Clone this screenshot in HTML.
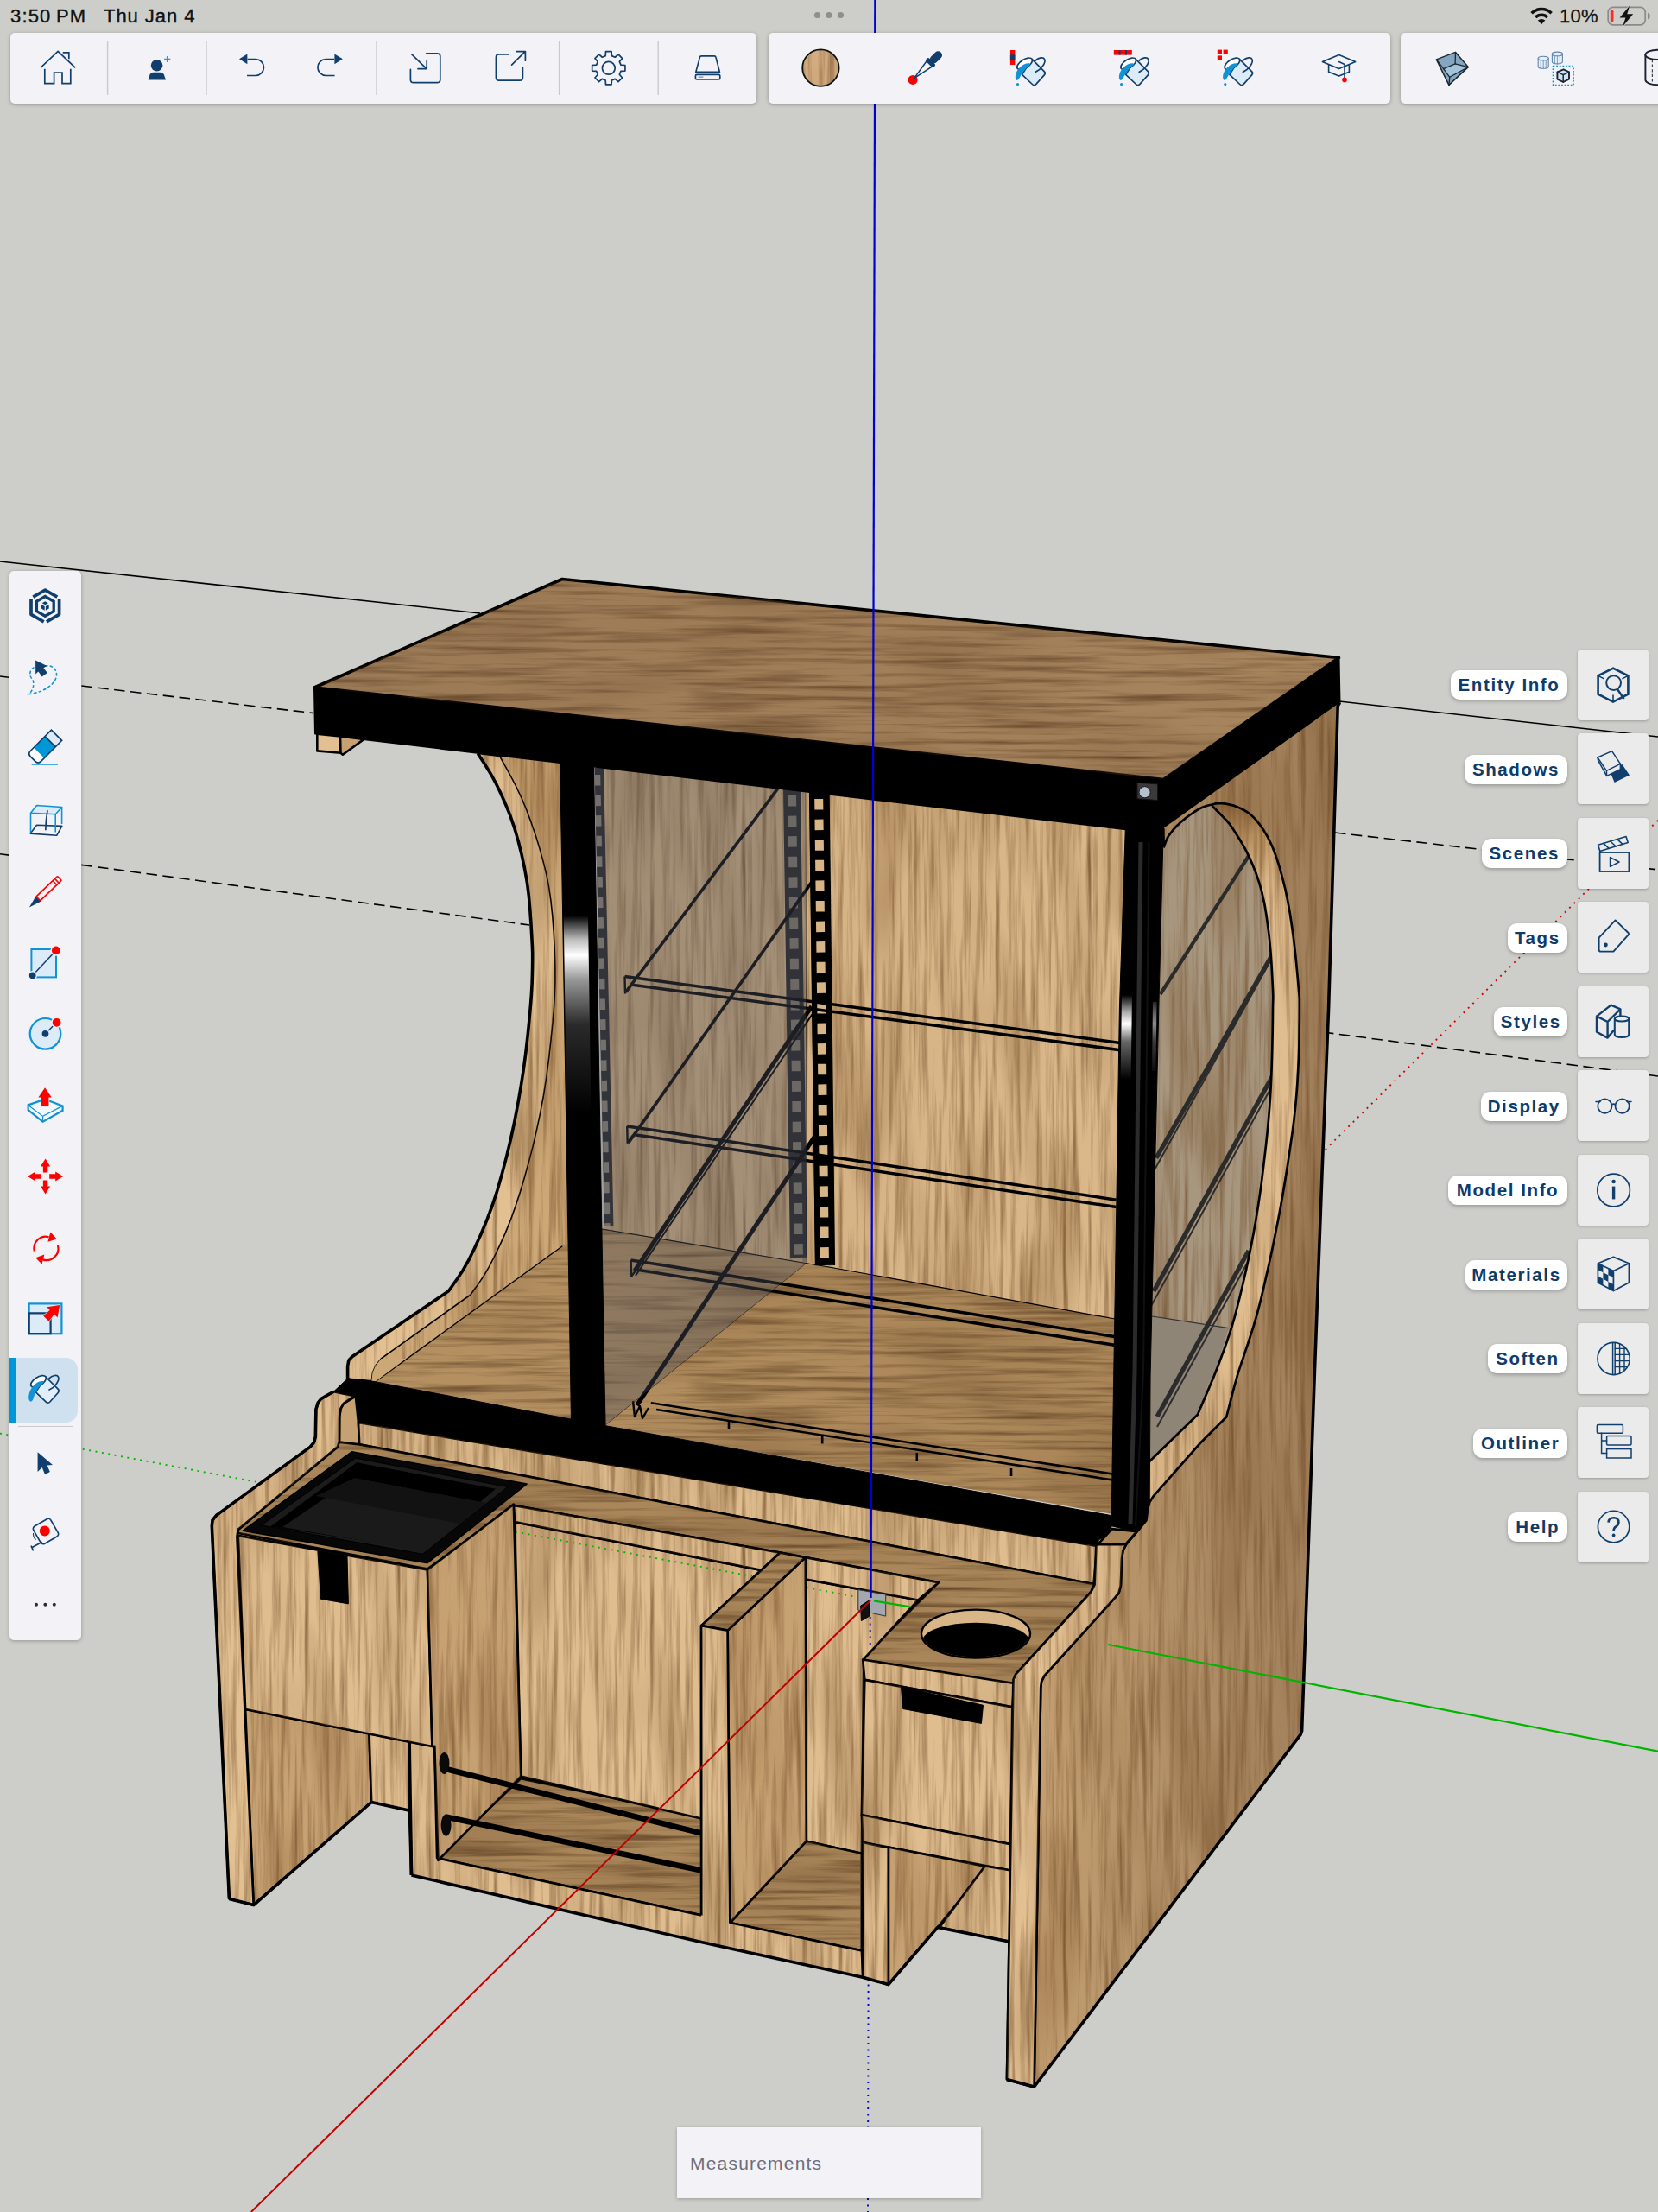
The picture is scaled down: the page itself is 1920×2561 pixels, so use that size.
<!DOCTYPE html>
<html lang="en">
<head>
<meta charset="utf-8">
<title>SketchUp</title>
<style>
html,body{margin:0;padding:0;}
body{width:1920px;height:2561px;overflow:hidden;position:relative;background:#cdcec9;font-family:"Liberation Sans",sans-serif;}
#scene{position:absolute;left:0;top:0;}
.abs{position:absolute;}
.status{position:absolute;top:0;left:0;width:1920px;height:36px;color:#111;font-size:22px;line-height:36px;}
.status span{position:absolute;top:0;white-space:nowrap;}
.tb{position:absolute;background:#f2f2f7;border-radius:5px;box-shadow:0 1px 4px rgba(0,0,0,.28);}
.tb svg{position:absolute;overflow:visible;}
.sep{position:absolute;top:13px;width:2px;height:56px;background:#cfcfd4;}
.rb{position:absolute;left:1827px;width:82px;height:82px;background:#ebebeb;border-radius:4px;box-shadow:0 1px 3px rgba(0,0,0,.25);}
.rb svg{position:absolute;left:0;top:0;}
.lb{position:absolute;right:105px;height:34px;line-height:34px;background:#fff;border-radius:11px;color:#0e3b69;font-weight:bold;font-size:20.5px;letter-spacing:1.6px;padding:0 9px;box-shadow:0 2px 4px rgba(0,0,0,.25);white-space:nowrap;}
#meas{position:absolute;left:784px;top:2463px;width:352px;height:82px;background:#f2f2f7;box-shadow:0 1px 4px rgba(0,0,0,.25);color:#6d6d7a;font-size:21px;letter-spacing:1.2px;line-height:84px;text-indent:15px;}
</style>
</head>
<body>
<!--SCENE-->
<svg id="scene" width="1920" height="2561" viewBox="0 0 1920 2561">
<!--AXES-BACK-->
<g fill="none" stroke="#000" stroke-width="1.6">
<path d="M0 650 L556 710 M1551 812 L1920 853"/>
<path d="M0 783 L363 825.6 M1546 964 L1920 1007" stroke-dasharray="12.5 6.5"/>
<path d="M0 988.7 L613 1071 M1532 1195 L1920 1246" stroke-dasharray="12.5 6.5"/>
</g>
<path d="M1534.8 1331 L1920 949.7" stroke="#d40000" stroke-width="1.9" stroke-dasharray="1.9 5.6" fill="none"/>
<path d="M0 1659.6 L296 1715.6" stroke="#00b400" stroke-width="1.9" stroke-dasharray="1.9 5.6" fill="none"/>
<path d="M1005.6 2290 L1005 2561" stroke="#0000c8" stroke-width="1.9" stroke-dasharray="1.9 5.6" fill="none"/>
<!--/AXES-BACK-->
<!--MODEL-->
<defs>
<linearGradient id="gTop" gradientUnits="userSpaceOnUse" x1="400" y1="800" x2="1500" y2="800"><stop offset="0" stop-color="#9b7a56"/><stop offset=".5" stop-color="#a07e58"/><stop offset="1" stop-color="#a7855e"/></linearGradient>
<linearGradient id="gBack" gradientUnits="userSpaceOnUse" x1="700" y1="900" x2="1300" y2="900"><stop offset="0" stop-color="#d3b082"/><stop offset="1" stop-color="#dab88a"/></linearGradient>
<linearGradient id="gSide" gradientUnits="userSpaceOnUse" x1="1200" y1="1500" x2="1540" y2="1500"><stop offset="0" stop-color="#c29e71"/><stop offset=".6" stop-color="#ae8c64"/><stop offset="1" stop-color="#9e7e5a"/></linearGradient>
<linearGradient id="gFloor" gradientUnits="userSpaceOnUse" x1="400" y1="1500" x2="1300" y2="1700"><stop offset="0" stop-color="#b69263"/><stop offset="1" stop-color="#a98557"/></linearGradient>
<linearGradient id="gArc" gradientUnits="userSpaceOnUse" x1="0" y1="930" x2="0" y2="1020"><stop offset="0" stop-color="#8f6c45"/><stop offset=".4" stop-color="#c49c6a"/><stop offset="1" stop-color="#e0bd8f"/></linearGradient>
<linearGradient id="gPostL" gradientUnits="userSpaceOnUse" x1="0" y1="1060" x2="0" y2="1290"><stop offset="0" stop-color="#000"/><stop offset=".12" stop-color="#bbb"/><stop offset=".2" stop-color="#fff"/><stop offset=".32" stop-color="#999"/><stop offset=".55" stop-color="#2a2a2a"/><stop offset="1" stop-color="#000"/></linearGradient>
<linearGradient id="gPostR" gradientUnits="userSpaceOnUse" x1="0" y1="1152" x2="0" y2="1250"><stop offset="0" stop-color="#000"/><stop offset=".2" stop-color="#aaa"/><stop offset=".34" stop-color="#fff"/><stop offset=".55" stop-color="#666"/><stop offset="1" stop-color="#000"/></linearGradient>
<filter id="grainV" x="0" y="0" width="400" height="800" filterUnits="userSpaceOnUse" primitiveUnits="userSpaceOnUse" color-interpolation-filters="sRGB"><feTurbulence type="fractalNoise" baseFrequency="0.17 0.00625" numOctaves="4" seed="7" stitchTiles="stitch" result="n"/><feColorMatrix in="n" type="matrix" values="0 0 0 0 0.40  0 0 0 0 0.25  0 0 0 0 0.11  1.25 0.6 0 0 -0.84" result="c"/><feTurbulence type="fractalNoise" baseFrequency="0.02 0.005" numOctaves="2" seed="11" stitchTiles="stitch" result="m"/><feColorMatrix in="m" type="matrix" values="0 0 0 0 0.45  0 0 0 0 0.3  0 0 0 0 0.14  0 0.85 0 0 -0.36" result="d"/><feMerge result="e"><feMergeNode in="d"/><feMergeNode in="c"/></feMerge><feComposite in="e" in2="SourceGraphic" operator="in"/></filter>
<filter id="grainH" x="0" y="0" width="800" height="400" filterUnits="userSpaceOnUse" primitiveUnits="userSpaceOnUse" color-interpolation-filters="sRGB"><feTurbulence type="fractalNoise" baseFrequency="0.00625 0.16" numOctaves="4" seed="3" stitchTiles="stitch" result="n"/><feColorMatrix in="n" type="matrix" values="0 0 0 0 0.30  0 0 0 0 0.19  0 0 0 0 0.09  1.25 0.6 0 0 -0.84" result="c"/><feTurbulence type="fractalNoise" baseFrequency="0.005 0.02" numOctaves="2" seed="5" stitchTiles="stitch" result="m"/><feColorMatrix in="m" type="matrix" values="0 0 0 0 0.32  0 0 0 0 0.2  0 0 0 0 0.1  0 0.55 0 0 -0.24" result="d"/><feMerge result="e"><feMergeNode in="d"/><feMergeNode in="c"/></feMerge><feComposite in="e" in2="SourceGraphic" operator="in"/></filter>
<pattern id="pGV" width="400" height="800" patternUnits="userSpaceOnUse"><rect width="400" height="800" filter="url(#grainV)"/></pattern>
<pattern id="pGH" width="800" height="400" patternUnits="userSpaceOnUse"><rect width="800" height="400" filter="url(#grainH)"/></pattern>
</defs>
<polygon points="574.4,867.0 578.6,875.4 583.3,883.9 590.0,896.0 597.4,910.0 604.0,924.0 609.8,938.0 615.3,952.9 620.5,968.1 625.1,983.1 629.0,997.4 632.5,1011.5 635.4,1026.1 637.8,1042.2 639.8,1060.6 641.3,1080.7 642.3,1101.0 642.8,1119.9 642.8,1136.5 642.3,1151.7 641.4,1167.2 639.9,1184.4 637.9,1204.3 635.5,1225.9 632.6,1247.9 629.3,1268.9 625.6,1288.7 621.5,1308.0 617.1,1326.7 612.4,1344.9 607.5,1362.7 602.4,1380.0 597.0,1396.6 591.3,1412.4 585.2,1427.6 578.6,1442.1 572.1,1455.5 566.0,1467.3 559.9,1477.6 553.9,1486.6 548.6,1493.8 544.9,1499.0 441.4,1572.9 431.7,1601.8 668.0,1440.0 660.0,872.0" fill="#cda877" stroke="none" stroke-width="0" stroke-linejoin="round" />
<polygon points="574.4,867.0 578.6,875.4 583.3,883.9 590.0,896.0 597.4,910.0 604.0,924.0 609.8,938.0 615.3,952.9 620.5,968.1 625.1,983.1 629.0,997.4 632.5,1011.5 635.4,1026.1 637.8,1042.2 639.8,1060.6 641.3,1080.7 642.3,1101.0 642.8,1119.9 642.8,1136.5 642.3,1151.7 641.4,1167.2 639.9,1184.4 637.9,1204.3 635.5,1225.9 632.6,1247.9 629.3,1268.9 625.6,1288.7 621.5,1308.0 617.1,1326.7 612.4,1344.9 607.5,1362.7 602.4,1380.0 597.0,1396.6 591.3,1412.4 585.2,1427.6 578.6,1442.1 572.1,1455.5 566.0,1467.3 559.9,1477.6 553.9,1486.6 548.6,1493.8 544.9,1499.0 441.4,1572.9 431.7,1601.8 668.0,1440.0 660.0,872.0" fill="url(#pGV)"/>
<polygon points="690.0,886.0 1304.0,952.0 1292.0,1530.0 960.0,1466.0 700.0,1424.0" fill="url(#gBack)" stroke="none" stroke-width="0" stroke-linejoin="round" />
<polygon points="690.0,886.0 1304.0,952.0 1292.0,1530.0 960.0,1466.0 700.0,1424.0" fill="url(#pGV)"/>
<polygon points="697.0,1422.5 960.0,1466.5 1291.0,1527.0 1288.0,1752.7 409.0,1600.0 431.7,1601.8 651.3,1442.8" fill="url(#gFloor)" stroke="none" stroke-width="0" stroke-linejoin="round" />
<polygon points="697.0,1422.5 960.0,1466.5 1291.0,1527.0 1288.0,1752.7 409.0,1600.0 431.7,1601.8 651.3,1442.8" fill="url(#pGH)"/>
<polyline points="697.0,1423.0 960.0,1467.0 1291.0,1527.0" fill="none" stroke="#000" stroke-width="1.2" stroke-linejoin="round" stroke-linecap="butt" />
<polyline points="651.3,1442.8 431.7,1601.8" fill="none" stroke="#000" stroke-width="1.3" stroke-linejoin="round" stroke-linecap="butt" />
<line x1="693.8" y1="889" x2="705.2" y2="1420" stroke="#232323" stroke-width="10.5"/>
<line x1="692" y1="897" x2="703.4" y2="1420" stroke="#8b8173" stroke-width="6.4" stroke-dasharray="12.5 11.1"/>
<line x1="917" y1="913" x2="925" y2="1456" stroke="#222" stroke-width="20" opacity="1"/>
<line x1="917" y1="921" x2="925" y2="1456" stroke="#7d7466" stroke-width="10" stroke-dasharray="12.5 11.100000000000001" opacity="1"/>
<line x1="948.2" y1="917" x2="955" y2="1465" stroke="#000" stroke-width="22" opacity="1"/>
<line x1="948.2" y1="925" x2="955" y2="1465" stroke="#d8b587" stroke-width="10" stroke-dasharray="12.5 11.100000000000001" opacity="1"/>
<polyline points="938.0,917.0 945.0,1465.0" fill="none" stroke="#000" stroke-width="2.2" stroke-linejoin="round" stroke-linecap="butt" />
<polyline points="959.6,917.0 966.0,1465.0" fill="none" stroke="#000" stroke-width="2.2" stroke-linejoin="round" stroke-linecap="butt" />
<polyline points="723.5,1130.5 1299.0,1207.7" fill="none" stroke="#000" stroke-width="3.5" stroke-linejoin="round" stroke-linecap="butt" />
<polyline points="730.5,1140.0 1299.0,1216.0" fill="none" stroke="#000" stroke-width="3.5" stroke-linejoin="round" stroke-linecap="butt" />
<polyline points="726.2,1303.9 1292.6,1389.2" fill="none" stroke="#000" stroke-width="3.5" stroke-linejoin="round" stroke-linecap="butt" />
<polyline points="733.2,1313.4 1292.6,1397.5" fill="none" stroke="#000" stroke-width="3.5" stroke-linejoin="round" stroke-linecap="butt" />
<polyline points="730.6,1458.9 1290.5,1547.5" fill="none" stroke="#000" stroke-width="3.5" stroke-linejoin="round" stroke-linecap="butt" />
<polyline points="736.6,1469.9 1290.5,1557.3" fill="none" stroke="#000" stroke-width="3.5" stroke-linejoin="round" stroke-linecap="butt" />
<polyline points="723.5,1130.5 724.0,1149.5 730.5,1140.5" fill="none" stroke="#000" stroke-width="2.4" stroke-linejoin="round" stroke-linecap="butt" />
<polyline points="726.2,1303.9 726.7,1322.9 733.2,1313.9" fill="none" stroke="#000" stroke-width="2.4" stroke-linejoin="round" stroke-linecap="butt" />
<polyline points="730.6,1458.9 731.1,1477.9 737.6,1468.9" fill="none" stroke="#000" stroke-width="2.4" stroke-linejoin="round" stroke-linecap="butt" />
<polyline points="901.0,912.7 724.8,1148.5" fill="none" stroke="#000" stroke-width="3.6" stroke-linejoin="round" stroke-linecap="butt" />
<polyline points="944.0,1015.4 727.6,1323.3" fill="none" stroke="#000" stroke-width="3.6" stroke-linejoin="round" stroke-linecap="butt" />
<polyline points="939.9,1165.2 734.9,1471.5" fill="none" stroke="#000" stroke-width="5" stroke-linejoin="round" stroke-linecap="butt" />
<polyline points="944.0,1315.0 737.5,1627.0" fill="none" stroke="#000" stroke-width="5" stroke-linejoin="round" stroke-linecap="butt" />
<polyline points="943.5,1170.0 736.0,1477.0" fill="none" stroke="#000" stroke-width="2" stroke-linejoin="round" stroke-linecap="butt" />
<polyline points="753.8,1624.2 1290.0,1706.7" fill="none" stroke="#000" stroke-width="2.6" stroke-linejoin="round" stroke-linecap="butt" />
<polyline points="760.0,1632.0 1290.0,1713.7" fill="none" stroke="#000" stroke-width="2.6" stroke-linejoin="round" stroke-linecap="butt" />
<polyline points="844.0,1645.0 844.0,1654.0" fill="none" stroke="#000" stroke-width="2.6" stroke-linejoin="round" stroke-linecap="butt" />
<polyline points="952.2,1662.5 952.2,1671.5" fill="none" stroke="#000" stroke-width="2.6" stroke-linejoin="round" stroke-linecap="butt" />
<polyline points="1061.8,1682.0 1061.8,1691.0" fill="none" stroke="#000" stroke-width="2.6" stroke-linejoin="round" stroke-linecap="butt" />
<polyline points="1171.0,1700.0 1171.0,1709.0" fill="none" stroke="#000" stroke-width="2.6" stroke-linejoin="round" stroke-linecap="butt" />
<polyline points="733.0,1622.0 735.0,1640.0 741.0,1628.0 744.0,1642.0 751.0,1630.0" fill="none" stroke="#000" stroke-width="2.4" stroke-linejoin="round" stroke-linecap="butt" />
<polygon points="687.4,887.0 933.0,914.0 934.3,1462.0 701.3,1649.7 697.0,1500.0" fill="rgba(78,84,96,0.36)" stroke="rgba(0,0,0,.5)" stroke-width="1" stroke-linejoin="round" />
<polygon points="553.3,872.5 557.1,878.3 562.5,886.6 568.6,896.5 574.4,907.1 579.8,918.3 585.3,930.7 590.7,943.9 595.5,957.8 599.9,972.7 603.9,988.7 607.4,1005.0 610.3,1021.1 612.4,1037.6 613.9,1054.5 615.0,1070.5 615.8,1084.4 616.4,1095.0 616.7,1103.4 616.7,1111.1 616.6,1119.9 616.4,1129.4 616.1,1139.1 615.5,1150.0 614.5,1163.3 613.0,1179.9 611.1,1199.0 608.8,1219.2 606.1,1239.3 603.0,1259.2 599.5,1279.4 595.6,1299.6 591.3,1319.5 586.6,1339.1 581.5,1358.5 576.1,1377.5 570.2,1395.5 563.7,1412.9 556.6,1429.7 549.5,1445.3 542.8,1458.9 536.1,1470.7 529.4,1480.8 523.6,1489.0 519.5,1494.8 407.7,1570.7 403.8,1575.0 402.6,1582.0 402.6,1596.0 430.3,1598.8 431.5,1589.0 435.0,1581.0 441.4,1572.9 544.9,1499.0 548.6,1493.8 553.9,1486.6 559.9,1477.6 566.0,1467.3 572.1,1455.5 578.6,1442.1 585.2,1427.6 591.3,1412.4 597.0,1396.6 602.4,1380.0 607.5,1362.7 612.4,1344.9 617.1,1326.7 621.5,1308.0 625.6,1288.7 629.3,1268.9 632.6,1247.9 635.5,1225.9 637.9,1204.3 639.9,1184.4 641.4,1167.2 642.3,1151.7 642.8,1136.5 642.8,1119.9 642.3,1101.0 641.3,1080.7 639.8,1060.6 637.8,1042.2 635.4,1026.1 632.5,1011.5 629.0,997.4 625.1,983.1 620.5,968.1 615.3,952.9 609.8,938.0 604.0,924.0 597.4,910.0 590.0,896.0 583.3,883.9 578.6,875.4" fill="#e2c092" stroke="#000" stroke-width="1.6" stroke-linejoin="round" />
<polygon points="553.3,872.5 557.1,878.3 562.5,886.6 568.6,896.5 574.4,907.1 579.8,918.3 585.3,930.7 590.7,943.9 595.5,957.8 599.9,972.7 603.9,988.7 607.4,1005.0 610.3,1021.1 612.4,1037.6 613.9,1054.5 615.0,1070.5 615.8,1084.4 616.4,1095.0 616.7,1103.4 616.7,1111.1 616.6,1119.9 616.4,1129.4 616.1,1139.1 615.5,1150.0 614.5,1163.3 613.0,1179.9 611.1,1199.0 608.8,1219.2 606.1,1239.3 603.0,1259.2 599.5,1279.4 595.6,1299.6 591.3,1319.5 586.6,1339.1 581.5,1358.5 576.1,1377.5 570.2,1395.5 563.7,1412.9 556.6,1429.7 549.5,1445.3 542.8,1458.9 536.1,1470.7 529.4,1480.8 523.6,1489.0 519.5,1494.8 407.7,1570.7 403.8,1575.0 402.6,1582.0 402.6,1596.0 430.3,1598.8 431.5,1589.0 435.0,1581.0 441.4,1572.9 544.9,1499.0 548.6,1493.8 553.9,1486.6 559.9,1477.6 566.0,1467.3 572.1,1455.5 578.6,1442.1 585.2,1427.6 591.3,1412.4 597.0,1396.6 602.4,1380.0 607.5,1362.7 612.4,1344.9 617.1,1326.7 621.5,1308.0 625.6,1288.7 629.3,1268.9 632.6,1247.9 635.5,1225.9 637.9,1204.3 639.9,1184.4 641.4,1167.2 642.3,1151.7 642.8,1136.5 642.8,1119.9 642.3,1101.0 641.3,1080.7 639.8,1060.6 637.8,1042.2 635.4,1026.1 632.5,1011.5 629.0,997.4 625.1,983.1 620.5,968.1 615.3,952.9 609.8,938.0 604.0,924.0 597.4,910.0 590.0,896.0 583.3,883.9 578.6,875.4" fill="url(#pGV)"/>
<polyline points="553.3,872.5 557.1,878.3 562.5,886.6 568.6,896.5 574.4,907.1 579.8,918.3 585.3,930.7 590.7,943.9 595.5,957.8 599.9,972.7 603.9,988.7 607.4,1005.0 610.3,1021.1 612.4,1037.6 613.9,1054.5 615.0,1070.5 615.8,1084.4 616.4,1095.0 616.7,1103.4 616.7,1111.1 616.6,1119.9 616.4,1129.4 616.1,1139.1 615.5,1150.0 614.5,1163.3 613.0,1179.9 611.1,1199.0 608.8,1219.2 606.1,1239.3 603.0,1259.2 599.5,1279.4 595.6,1299.6 591.3,1319.5 586.6,1339.1 581.5,1358.5 576.1,1377.5 570.2,1395.5 563.7,1412.9 556.6,1429.7 549.5,1445.3 542.8,1458.9 536.1,1470.7 529.4,1480.8 523.6,1489.0 519.5,1494.8 407.7,1570.7 403.8,1575.0 402.6,1582.0 402.6,1596.0" fill="none" stroke="#000" stroke-width="3.6" stroke-linejoin="round" stroke-linecap="butt" />
<polygon points="648.6,880.0 687.4,884.0 700.9,1652.0 661.5,1646.0" fill="#000" stroke="#000" stroke-width="1" stroke-linejoin="round" />
<polygon points="652.7,1060.0 681.0,1060.0 684.5,1290.0 656.2,1290.0" fill="url(#gPostL)" stroke="none" stroke-width="0" stroke-linejoin="round" />
<polygon points="364.0,796.0 1347.3,902.5 1347.3,965.4 365.0,849.5" fill="#000" stroke="#000" stroke-width="2" stroke-linejoin="round" />
<polygon points="367.3,849.6 394.0,852.5 394.5,871.8 367.3,869.4" fill="#e2c092" stroke="#000" stroke-width="2.6" stroke-linejoin="round" />
<polygon points="394.0,852.5 417.2,855.4 420.1,856.9 396.9,873.7 394.5,871.8" fill="#c6a172" stroke="#000" stroke-width="2.6" stroke-linejoin="round" />
<polygon points="651.0,670.5 1550.5,761.5 1347.3,902.5 364.0,796.0" fill="url(#gTop)" stroke="#000" stroke-width="3.6" stroke-linejoin="round" />
<polygon points="651.0,670.5 1550.5,761.5 1347.3,902.5 364.0,796.0" fill="url(#pGH)"/>
<polygon points="1347.3,960.0 1347.6,981.3 1348.4,978.9 1349.6,975.5 1351.2,971.5 1353.3,967.7 1356.0,964.0 1359.1,960.1 1362.8,956.2 1366.9,952.3 1371.8,948.2 1377.4,944.0 1383.0,940.0 1388.1,936.9 1392.4,934.8 1396.4,933.3 1400.1,932.3 1403.5,931.5 1403.5,933.0 1405.6,935.0 1408.6,938.0 1411.9,941.3 1415.1,944.6 1417.8,947.4 1420.4,950.0 1423.3,953.3 1426.7,958.1 1431.1,964.7 1436.1,972.7 1441.3,981.6 1446.0,990.9 1450.3,1000.6 1454.4,1010.8 1458.1,1021.7 1461.4,1033.4 1464.2,1046.0 1466.5,1059.4 1468.4,1073.4 1470.1,1087.4 1471.5,1102.4 1472.6,1118.4 1473.4,1133.3 1474.0,1145.3 1474.3,1152.4 1474.3,1156.1 1474.2,1159.9 1474.0,1167.0 1473.9,1178.9 1473.7,1193.7 1473.4,1209.6 1473.0,1224.9 1472.5,1239.4 1471.9,1253.9 1471.1,1268.3 1470.1,1282.8 1468.9,1297.3 1467.5,1311.8 1466.0,1326.2 1464.3,1340.7 1462.6,1355.2 1460.8,1369.7 1458.8,1384.1 1456.6,1398.6 1454.2,1413.1 1451.7,1427.5 1448.9,1442.0 1446.0,1456.5 1442.8,1471.4 1439.3,1486.7 1435.8,1501.3 1432.5,1514.4 1429.6,1525.4 1426.8,1534.8 1424.0,1543.6 1420.9,1553.0 1417.4,1563.0 1413.6,1573.1 1409.7,1583.4 1405.5,1593.9 1400.6,1605.7 1395.2,1618.4 1390.3,1629.8 1386.9,1637.7 1331.4,1691.8 1331.4,1700.0 1332.1,1594.0 1341.8,1167.0" fill="#a8977f" stroke="none" stroke-width="0" stroke-linejoin="round" />
<polygon points="1347.3,960.0 1347.6,981.3 1348.4,978.9 1349.6,975.5 1351.2,971.5 1353.3,967.7 1356.0,964.0 1359.1,960.1 1362.8,956.2 1366.9,952.3 1371.8,948.2 1377.4,944.0 1383.0,940.0 1388.1,936.9 1392.4,934.8 1396.4,933.3 1400.1,932.3 1403.5,931.5 1403.5,933.0 1405.6,935.0 1408.6,938.0 1411.9,941.3 1415.1,944.6 1417.8,947.4 1420.4,950.0 1423.3,953.3 1426.7,958.1 1431.1,964.7 1436.1,972.7 1441.3,981.6 1446.0,990.9 1450.3,1000.6 1454.4,1010.8 1458.1,1021.7 1461.4,1033.4 1464.2,1046.0 1466.5,1059.4 1468.4,1073.4 1470.1,1087.4 1471.5,1102.4 1472.6,1118.4 1473.4,1133.3 1474.0,1145.3 1474.3,1152.4 1474.3,1156.1 1474.2,1159.9 1474.0,1167.0 1473.9,1178.9 1473.7,1193.7 1473.4,1209.6 1473.0,1224.9 1472.5,1239.4 1471.9,1253.9 1471.1,1268.3 1470.1,1282.8 1468.9,1297.3 1467.5,1311.8 1466.0,1326.2 1464.3,1340.7 1462.6,1355.2 1460.8,1369.7 1458.8,1384.1 1456.6,1398.6 1454.2,1413.1 1451.7,1427.5 1448.9,1442.0 1446.0,1456.5 1442.8,1471.4 1439.3,1486.7 1435.8,1501.3 1432.5,1514.4 1429.6,1525.4 1426.8,1534.8 1424.0,1543.6 1420.9,1553.0 1417.4,1563.0 1413.6,1573.1 1409.7,1583.4 1405.5,1593.9 1400.6,1605.7 1395.2,1618.4 1390.3,1629.8 1386.9,1637.7 1331.4,1691.8 1331.4,1700.0 1332.1,1594.0 1341.8,1167.0" fill="url(#pGV)"/>
<polygon points="1334.0,1524.0 1422.8,1537.6 1405.5,1593.9 1400.8,1596.1 1386.9,1637.7 1331.4,1691.8 1331.4,1700.0" fill="#8f8576" stroke="none" stroke-width="0" stroke-linejoin="round" />
<polyline points="1334.0,1524.0 1422.8,1537.6" fill="none" stroke="#333" stroke-width="1.2" stroke-linejoin="round" stroke-linecap="butt" />
<g clip-path="url(#cArch)">
<clipPath id="cArch"><polygon points="1347.3,960.0 1347.6,981.3 1348.4,978.9 1349.6,975.5 1351.2,971.5 1353.3,967.7 1356.0,964.0 1359.1,960.1 1362.8,956.2 1366.9,952.3 1371.8,948.2 1377.4,944.0 1383.0,940.0 1388.1,936.9 1392.4,934.8 1396.4,933.3 1400.1,932.3 1403.5,931.5 1403.5,933.0 1405.6,935.0 1408.6,938.0 1411.9,941.3 1415.1,944.6 1417.8,947.4 1420.4,950.0 1423.3,953.3 1426.7,958.1 1431.1,964.7 1436.1,972.7 1441.3,981.6 1446.0,990.9 1450.3,1000.6 1454.4,1010.8 1458.1,1021.7 1461.4,1033.4 1464.2,1046.0 1466.5,1059.4 1468.4,1073.4 1470.1,1087.4 1471.5,1102.4 1472.6,1118.4 1473.4,1133.3 1474.0,1145.3 1474.3,1152.4 1474.3,1156.1 1474.2,1159.9 1474.0,1167.0 1473.9,1178.9 1473.7,1193.7 1473.4,1209.6 1473.0,1224.9 1472.5,1239.4 1471.9,1253.9 1471.1,1268.3 1470.1,1282.8 1468.9,1297.3 1467.5,1311.8 1466.0,1326.2 1464.3,1340.7 1462.6,1355.2 1460.8,1369.7 1458.8,1384.1 1456.6,1398.6 1454.2,1413.1 1451.7,1427.5 1448.9,1442.0 1446.0,1456.5 1442.8,1471.4 1439.3,1486.7 1435.8,1501.3 1432.5,1514.4 1429.6,1525.4 1426.8,1534.8 1424.0,1543.6 1420.9,1553.0 1417.4,1563.0 1413.6,1573.1 1409.7,1583.4 1405.5,1593.9 1400.6,1605.7 1395.2,1618.4 1390.3,1629.8 1386.9,1637.7 1331.4,1691.8 1331.4,1700.0 1332.1,1594.0 1341.8,1167.0"/></clipPath>
<polyline points="1446.0,991.0 1343.7,1151.0" fill="none" stroke="#2b2b2b" stroke-width="4.2" stroke-linejoin="round" stroke-linecap="butt" />
<polyline points="1474.0,1104.0 1338.9,1340.7" fill="none" stroke="#2b2b2b" stroke-width="5.2" stroke-linejoin="round" stroke-linecap="butt" />
<polyline points="1474.0,1245.0 1336.0,1495.0" fill="none" stroke="#2b2b2b" stroke-width="5.2" stroke-linejoin="round" stroke-linecap="butt" />
<polyline points="1446.0,1448.0 1340.0,1640.0" fill="none" stroke="#2b2b2b" stroke-width="5.2" stroke-linejoin="round" stroke-linecap="butt" />
<polyline points="1478.0,1100.0 1336.0,1356.0" fill="none" stroke="#2b2b2b" stroke-width="2" stroke-linejoin="round" stroke-linecap="butt" />
<polyline points="1476.0,1252.0 1333.0,1512.0" fill="none" stroke="#2b2b2b" stroke-width="2" stroke-linejoin="round" stroke-linecap="butt" />
<polyline points="1450.0,1452.0 1340.0,1652.0" fill="none" stroke="#2b2b2b" stroke-width="2" stroke-linejoin="round" stroke-linecap="butt" />
</g>
<polygon points="1347.3,902.5 1550.5,761.5 1551.5,813.5 1347.3,959.0" fill="#000" stroke="#000" stroke-width="2" stroke-linejoin="round" />
<polygon points="1403.5,931.5 1406.5,930.7 1409.1,930.2 1411.7,929.9 1415.1,930.1 1419.4,930.7 1424.3,931.6 1429.4,932.9 1434.4,934.9 1439.2,937.3 1444.1,940.0 1448.9,943.6 1453.7,948.4 1458.6,954.4 1463.6,961.6 1468.4,969.8 1473.0,979.3 1477.3,990.3 1481.3,1002.7 1485.0,1016.0 1488.4,1029.5 1491.3,1043.4 1493.9,1058.0 1496.1,1072.7 1498.1,1087.4 1499.9,1102.7 1501.5,1118.6 1502.9,1133.4 1503.9,1145.3 1504.5,1152.4 1504.8,1156.1 1504.8,1159.9 1504.8,1167.0 1504.8,1178.9 1504.6,1193.7 1504.4,1209.6 1503.9,1224.9 1503.2,1239.4 1502.4,1253.9 1501.3,1268.3 1500.0,1282.8 1498.4,1297.3 1496.5,1311.8 1494.4,1326.2 1492.3,1340.7 1490.1,1355.2 1487.7,1369.7 1485.3,1384.1 1482.7,1398.6 1480.0,1413.1 1477.1,1427.5 1474.2,1442.0 1471.1,1456.5 1467.8,1471.4 1464.3,1486.7 1460.9,1501.3 1457.6,1514.4 1454.6,1525.4 1451.8,1534.8 1449.0,1543.6 1446.0,1553.0 1442.7,1562.9 1439.3,1573.0 1435.8,1583.2 1432.5,1593.9 1429.1,1606.2 1425.5,1619.8 1422.4,1632.0 1420.2,1640.5 1389.7,1671.0 1335.8,1732.1 1331.2,1739.3 1329.2,1747.1 1327.4,1760.4 1318.9,1770.7 1304.4,1787.6 1300.5,1794.8 1299.0,1804.4 1297.8,1835.8 1295.6,1844.2 1291.2,1849.7 1209.4,1940.1 1206.0,1947.0 1205.2,1954.0 1197.6,2416.0 1166.0,2407.5 1173.3,1951.2 1173.6,1944.3 1176.1,1938.7 1263.5,1843.0 1267.6,1834.7 1269.3,1790.3 1271.8,1782.0 1284.3,1776.4 1295.4,1737.6 1331.4,1691.8 1386.9,1637.7 1386.9,1637.7 1390.3,1629.8 1395.2,1618.4 1400.6,1605.7 1405.5,1593.9 1409.7,1583.4 1413.6,1573.1 1417.4,1563.0 1420.9,1553.0 1424.0,1543.6 1426.8,1534.8 1429.6,1525.4 1432.5,1514.4 1435.8,1501.3 1439.3,1486.7 1442.8,1471.4 1446.0,1456.5 1448.9,1442.0 1451.7,1427.5 1454.2,1413.1 1456.6,1398.6 1458.8,1384.1 1460.8,1369.7 1462.6,1355.2 1464.3,1340.7 1466.0,1326.2 1467.5,1311.8 1468.9,1297.3 1470.1,1282.8 1471.1,1268.3 1471.9,1253.9 1472.5,1239.4 1473.0,1224.9 1473.4,1209.6 1473.7,1193.7 1473.9,1178.9 1474.0,1167.0 1474.2,1159.9 1474.3,1156.1 1474.3,1152.4 1474.0,1145.3 1473.4,1133.3 1472.6,1118.4 1471.5,1102.4 1470.1,1087.4 1468.4,1073.4 1466.5,1059.4 1464.2,1046.0 1461.4,1033.4 1458.1,1021.7 1454.4,1010.8 1450.3,1000.6 1446.0,990.9 1441.3,981.6 1436.1,972.7 1431.1,964.7 1426.7,958.1 1423.3,953.3 1420.4,950.0 1417.8,947.4 1415.1,944.6 1411.9,941.3 1408.6,938.0 1405.6,935.0 1403.5,933.0" fill="url(#gArc)" stroke="none" stroke-width="0" stroke-linejoin="round" />
<polygon points="1403.5,931.5 1406.5,930.7 1409.1,930.2 1411.7,929.9 1415.1,930.1 1419.4,930.7 1424.3,931.6 1429.4,932.9 1434.4,934.9 1439.2,937.3 1444.1,940.0 1448.9,943.6 1453.7,948.4 1458.6,954.4 1463.6,961.6 1468.4,969.8 1473.0,979.3 1477.3,990.3 1481.3,1002.7 1485.0,1016.0 1488.4,1029.5 1491.3,1043.4 1493.9,1058.0 1496.1,1072.7 1498.1,1087.4 1499.9,1102.7 1501.5,1118.6 1502.9,1133.4 1503.9,1145.3 1504.5,1152.4 1504.8,1156.1 1504.8,1159.9 1504.8,1167.0 1504.8,1178.9 1504.6,1193.7 1504.4,1209.6 1503.9,1224.9 1503.2,1239.4 1502.4,1253.9 1501.3,1268.3 1500.0,1282.8 1498.4,1297.3 1496.5,1311.8 1494.4,1326.2 1492.3,1340.7 1490.1,1355.2 1487.7,1369.7 1485.3,1384.1 1482.7,1398.6 1480.0,1413.1 1477.1,1427.5 1474.2,1442.0 1471.1,1456.5 1467.8,1471.4 1464.3,1486.7 1460.9,1501.3 1457.6,1514.4 1454.6,1525.4 1451.8,1534.8 1449.0,1543.6 1446.0,1553.0 1442.7,1562.9 1439.3,1573.0 1435.8,1583.2 1432.5,1593.9 1429.1,1606.2 1425.5,1619.8 1422.4,1632.0 1420.2,1640.5 1389.7,1671.0 1335.8,1732.1 1331.2,1739.3 1329.2,1747.1 1327.4,1760.4 1318.9,1770.7 1304.4,1787.6 1300.5,1794.8 1299.0,1804.4 1297.8,1835.8 1295.6,1844.2 1291.2,1849.7 1209.4,1940.1 1206.0,1947.0 1205.2,1954.0 1197.6,2416.0 1166.0,2407.5 1173.3,1951.2 1173.6,1944.3 1176.1,1938.7 1263.5,1843.0 1267.6,1834.7 1269.3,1790.3 1271.8,1782.0 1284.3,1776.4 1295.4,1737.6 1331.4,1691.8 1386.9,1637.7 1386.9,1637.7 1390.3,1629.8 1395.2,1618.4 1400.6,1605.7 1405.5,1593.9 1409.7,1583.4 1413.6,1573.1 1417.4,1563.0 1420.9,1553.0 1424.0,1543.6 1426.8,1534.8 1429.6,1525.4 1432.5,1514.4 1435.8,1501.3 1439.3,1486.7 1442.8,1471.4 1446.0,1456.5 1448.9,1442.0 1451.7,1427.5 1454.2,1413.1 1456.6,1398.6 1458.8,1384.1 1460.8,1369.7 1462.6,1355.2 1464.3,1340.7 1466.0,1326.2 1467.5,1311.8 1468.9,1297.3 1470.1,1282.8 1471.1,1268.3 1471.9,1253.9 1472.5,1239.4 1473.0,1224.9 1473.4,1209.6 1473.7,1193.7 1473.9,1178.9 1474.0,1167.0 1474.2,1159.9 1474.3,1156.1 1474.3,1152.4 1474.0,1145.3 1473.4,1133.3 1472.6,1118.4 1471.5,1102.4 1470.1,1087.4 1468.4,1073.4 1466.5,1059.4 1464.2,1046.0 1461.4,1033.4 1458.1,1021.7 1454.4,1010.8 1450.3,1000.6 1446.0,990.9 1441.3,981.6 1436.1,972.7 1431.1,964.7 1426.7,958.1 1423.3,953.3 1420.4,950.0 1417.8,947.4 1415.1,944.6 1411.9,941.3 1408.6,938.0 1405.6,935.0 1403.5,933.0" fill="url(#pGV)"/>
<polyline points="1403.5,933.0 1405.6,935.0 1408.6,938.0 1411.9,941.3 1415.1,944.6 1417.8,947.4 1420.4,950.0 1423.3,953.3 1426.7,958.1 1431.1,964.7 1436.1,972.7 1441.3,981.6 1446.0,990.9 1450.3,1000.6 1454.4,1010.8 1458.1,1021.7 1461.4,1033.4 1464.2,1046.0 1466.5,1059.4 1468.4,1073.4 1470.1,1087.4 1471.5,1102.4 1472.6,1118.4 1473.4,1133.3 1474.0,1145.3 1474.3,1152.4 1474.3,1156.1 1474.2,1159.9 1474.0,1167.0 1473.9,1178.9 1473.7,1193.7 1473.4,1209.6 1473.0,1224.9 1472.5,1239.4 1471.9,1253.9 1471.1,1268.3 1470.1,1282.8 1468.9,1297.3 1467.5,1311.8 1466.0,1326.2 1464.3,1340.7 1462.6,1355.2 1460.8,1369.7 1458.8,1384.1 1456.6,1398.6 1454.2,1413.1 1451.7,1427.5 1448.9,1442.0 1446.0,1456.5 1442.8,1471.4 1439.3,1486.7 1435.8,1501.3 1432.5,1514.4 1429.6,1525.4 1426.8,1534.8 1424.0,1543.6 1420.9,1553.0 1417.4,1563.0 1413.6,1573.1 1409.7,1583.4 1405.5,1593.9 1400.6,1605.7 1395.2,1618.4 1390.3,1629.8 1386.9,1637.7 1331.4,1691.8 1295.4,1737.6" fill="none" stroke="#000" stroke-width="2.7" stroke-linejoin="round" stroke-linecap="butt" />
<polyline points="1284.3,1776.4 1271.8,1782.0 1269.3,1790.3 1267.6,1834.7 1263.5,1843.0 1176.1,1938.7 1173.6,1944.3 1173.3,1951.2 1166.0,2407.5" fill="none" stroke="#000" stroke-width="2.7" stroke-linejoin="round" stroke-linecap="butt" />
<polygon points="1347.3,959.0 1347.6,981.3 1348.4,978.9 1349.6,975.5 1351.2,971.5 1353.3,967.7 1356.0,964.0 1359.1,960.1 1362.8,956.2 1366.9,952.3 1371.8,948.2 1377.4,944.0 1383.0,940.0 1388.1,936.9 1392.4,934.8 1396.4,933.3 1400.1,932.3 1403.5,931.5 1406.5,930.7 1409.1,930.2 1411.7,929.9 1415.1,930.1 1419.4,930.7 1424.3,931.6 1429.4,932.9 1434.4,934.9 1439.2,937.3 1444.1,940.0 1448.9,943.6 1453.7,948.4 1458.6,954.4 1463.6,961.6 1468.4,969.8 1473.0,979.3 1477.3,990.3 1481.3,1002.7 1485.0,1016.0 1488.4,1029.5 1491.3,1043.4 1493.9,1058.0 1496.1,1072.7 1498.1,1087.4 1499.9,1102.7 1501.5,1118.6 1502.9,1133.4 1503.9,1145.3 1504.5,1152.4 1504.8,1156.1 1504.8,1159.9 1504.8,1167.0 1504.8,1178.9 1504.6,1193.7 1504.4,1209.6 1503.9,1224.9 1503.2,1239.4 1502.4,1253.9 1501.3,1268.3 1500.0,1282.8 1498.4,1297.3 1496.5,1311.8 1494.4,1326.2 1492.3,1340.7 1490.1,1355.2 1487.7,1369.7 1485.3,1384.1 1482.7,1398.6 1480.0,1413.1 1477.1,1427.5 1474.2,1442.0 1471.1,1456.5 1467.8,1471.4 1464.3,1486.7 1460.9,1501.3 1457.6,1514.4 1454.6,1525.4 1451.8,1534.8 1449.0,1543.6 1446.0,1553.0 1442.7,1562.9 1439.3,1573.0 1435.8,1583.2 1432.5,1593.9 1429.1,1606.2 1425.5,1619.8 1422.4,1632.0 1420.2,1640.5 1389.7,1671.0 1335.8,1732.1 1331.2,1739.3 1329.2,1747.1 1327.4,1760.4 1318.9,1770.7 1304.4,1787.6 1300.5,1794.8 1299.0,1804.4 1297.8,1835.8 1295.6,1844.2 1291.2,1849.7 1209.4,1940.1 1206.0,1947.0 1205.2,1954.0 1197.6,2416.0 1506.2,2008.1 1507.6,2003.9 1522.2,1593.9 1530.9,1360.0 1538.6,1166.9 1549.2,817.2 1551.5,813.5" fill="url(#gSide)" stroke="none" stroke-width="0" stroke-linejoin="round" />
<polygon points="1347.3,959.0 1347.6,981.3 1348.4,978.9 1349.6,975.5 1351.2,971.5 1353.3,967.7 1356.0,964.0 1359.1,960.1 1362.8,956.2 1366.9,952.3 1371.8,948.2 1377.4,944.0 1383.0,940.0 1388.1,936.9 1392.4,934.8 1396.4,933.3 1400.1,932.3 1403.5,931.5 1406.5,930.7 1409.1,930.2 1411.7,929.9 1415.1,930.1 1419.4,930.7 1424.3,931.6 1429.4,932.9 1434.4,934.9 1439.2,937.3 1444.1,940.0 1448.9,943.6 1453.7,948.4 1458.6,954.4 1463.6,961.6 1468.4,969.8 1473.0,979.3 1477.3,990.3 1481.3,1002.7 1485.0,1016.0 1488.4,1029.5 1491.3,1043.4 1493.9,1058.0 1496.1,1072.7 1498.1,1087.4 1499.9,1102.7 1501.5,1118.6 1502.9,1133.4 1503.9,1145.3 1504.5,1152.4 1504.8,1156.1 1504.8,1159.9 1504.8,1167.0 1504.8,1178.9 1504.6,1193.7 1504.4,1209.6 1503.9,1224.9 1503.2,1239.4 1502.4,1253.9 1501.3,1268.3 1500.0,1282.8 1498.4,1297.3 1496.5,1311.8 1494.4,1326.2 1492.3,1340.7 1490.1,1355.2 1487.7,1369.7 1485.3,1384.1 1482.7,1398.6 1480.0,1413.1 1477.1,1427.5 1474.2,1442.0 1471.1,1456.5 1467.8,1471.4 1464.3,1486.7 1460.9,1501.3 1457.6,1514.4 1454.6,1525.4 1451.8,1534.8 1449.0,1543.6 1446.0,1553.0 1442.7,1562.9 1439.3,1573.0 1435.8,1583.2 1432.5,1593.9 1429.1,1606.2 1425.5,1619.8 1422.4,1632.0 1420.2,1640.5 1389.7,1671.0 1335.8,1732.1 1331.2,1739.3 1329.2,1747.1 1327.4,1760.4 1318.9,1770.7 1304.4,1787.6 1300.5,1794.8 1299.0,1804.4 1297.8,1835.8 1295.6,1844.2 1291.2,1849.7 1209.4,1940.1 1206.0,1947.0 1205.2,1954.0 1197.6,2416.0 1506.2,2008.1 1507.6,2003.9 1522.2,1593.9 1530.9,1360.0 1538.6,1166.9 1549.2,817.2 1551.5,813.5" fill="url(#pGV)"/>
<polyline points="1347.6,981.3 1348.4,978.9 1349.6,975.5 1351.2,971.5 1353.3,967.7 1356.0,964.0 1359.1,960.1 1362.8,956.2 1366.9,952.3 1371.8,948.2 1377.4,944.0 1383.0,940.0 1388.1,936.9 1392.4,934.8 1396.4,933.3 1400.1,932.3 1403.5,931.5 1406.5,930.7 1409.1,930.2 1411.7,929.9 1415.1,930.1 1419.4,930.7 1424.3,931.6 1429.4,932.9 1434.4,934.9 1439.2,937.3 1444.1,940.0 1448.9,943.6 1453.7,948.4 1458.6,954.4 1463.6,961.6 1468.4,969.8 1473.0,979.3 1477.3,990.3 1481.3,1002.7 1485.0,1016.0 1488.4,1029.5 1491.3,1043.4 1493.9,1058.0 1496.1,1072.7 1498.1,1087.4 1499.9,1102.7 1501.5,1118.6 1502.9,1133.4 1503.9,1145.3 1504.5,1152.4 1504.8,1156.1 1504.8,1159.9 1504.8,1167.0 1504.8,1178.9 1504.6,1193.7 1504.4,1209.6 1503.9,1224.9 1503.2,1239.4 1502.4,1253.9 1501.3,1268.3 1500.0,1282.8 1498.4,1297.3 1496.5,1311.8 1494.4,1326.2 1492.3,1340.7 1490.1,1355.2 1487.7,1369.7 1485.3,1384.1 1482.7,1398.6 1480.0,1413.1 1477.1,1427.5 1474.2,1442.0 1471.1,1456.5 1467.8,1471.4 1464.3,1486.7 1460.9,1501.3 1457.6,1514.4 1454.6,1525.4 1451.8,1534.8 1449.0,1543.6 1446.0,1553.0 1442.7,1562.9 1439.3,1573.0 1435.8,1583.2 1432.5,1593.9 1429.1,1606.2 1425.5,1619.8 1422.4,1632.0 1420.2,1640.5 1389.7,1671.0 1335.8,1732.1 1331.2,1739.3 1329.2,1747.1 1327.4,1760.4 1318.9,1770.7 1304.4,1787.6 1300.5,1794.8 1299.0,1804.4 1297.8,1835.8 1295.6,1844.2 1291.2,1849.7 1209.4,1940.1 1206.0,1947.0 1205.2,1954.0 1197.6,2416.0" fill="none" stroke="#000" stroke-width="2.7" stroke-linejoin="round" stroke-linecap="butt" />
<polyline points="1347.3,959.0 1347.6,981.3" fill="none" stroke="#000" stroke-width="2.7" stroke-linejoin="round" stroke-linecap="butt" />
<polyline points="1197.6,2416.0 1506.2,2008.1 1507.6,2003.9 1522.2,1593.9 1530.9,1360.0 1538.6,1166.9 1549.2,817.2 1551.5,813.5" fill="none" stroke="#000" stroke-width="3.6" stroke-linejoin="round" stroke-linecap="butt" />
<polyline points="1166.0,2407.5 1197.6,2416.0" fill="none" stroke="#000" stroke-width="3.6" stroke-linejoin="round" stroke-linecap="butt" />
<polygon points="397.9,1624.9 411.9,1616.7 414.8,1644.7 416.2,1672.4 407.6,1679.0 391.1,1675.1 392.9,1668.3 393.1,1640.4 394.5,1630.7" fill="#c6a172" stroke="#000" stroke-width="2.7" stroke-linejoin="round" />
<polygon points="441.4,1572.9 470.0,1573.0 431.7,1601.8 430.3,1598.8 431.5,1589.0 435.0,1581.0" fill="#cda877" stroke="none" stroke-width="0" stroke-linejoin="round" />
<polygon points="1303.4,956.0 1347.3,958.0 1341.8,1167.0 1332.1,1594.0 1331.2,1739.3 1329.2,1747.1 1327.4,1760.4 1318.9,1770.7 1314.1,1773.1 1287.0,1766.7 1289.7,1594.0 1296.4,1167.0" fill="#000" stroke="#000" stroke-width="1" stroke-linejoin="round" />
<polyline points="1321.0,975.0 1314.0,1590.0 1309.0,1764.0" fill="none" stroke="#2b2b2b" stroke-width="5" stroke-linejoin="round" stroke-linecap="butt" />
<polyline points="1330.5,975.0 1324.0,1590.0 1315.0,1767.0" fill="none" stroke="#111" stroke-width="2" stroke-linejoin="round" stroke-linecap="butt" />
<polygon points="1299.0,1152.0 1311.0,1152.0 1309.6,1250.0 1297.6,1250.0" fill="url(#gPostR)" stroke="none" stroke-width="0" stroke-linejoin="round" />
<polygon points="1335.0,1160.0 1339.5,1160.0 1338.5,1240.0 1334.0,1240.0" fill="url(#gPostR)" stroke="none" stroke-width="0" stroke-linejoin="round" opacity=".55"/>
<polygon points="1316.9,906.3 1340.6,907.8 1340.6,926.6 1316.9,924.8" fill="#3a3a3a" stroke="#111" stroke-width="1" stroke-linejoin="round" />
<circle cx="1325.6" cy="917.2" r="6.6" fill="#b5c1cc" stroke="#111" stroke-width="1"/>
<polygon points="402.6,1596.0 430.3,1599.0 700.0,1650.5 1287.0,1754.6 1287.0,1768.0 1270.4,1791.0 415.0,1646.8 411.9,1616.7 410.4,1616.2 386.3,1611.2" fill="#000" stroke="#000" stroke-width="1" stroke-linejoin="round" />
<polygon points="415.0,1646.8 1270.4,1790.0 1266.5,1834.0 416.2,1672.3" fill="#dfbd8f" stroke="#000" stroke-width="2.7" stroke-linejoin="round" />
<polygon points="415.0,1646.8 1270.4,1790.0 1266.5,1834.0 416.2,1672.3" fill="url(#pGV)"/>
<polygon points="284.1,1979.0 427.5,2007.2 430.1,2086.5 293.7,2205.6" fill="#c6a172" stroke="#000" stroke-width="2.7" stroke-linejoin="round" />
<polygon points="284.1,1979.0 427.5,2007.2 430.1,2086.5 293.7,2205.6" fill="url(#pGV)"/>
<polygon points="427.5,2007.2 474.1,2016.4 474.4,2096.3 430.1,2086.5" fill="#dfbd8f" stroke="#000" stroke-width="2.7" stroke-linejoin="round" />
<polygon points="427.5,2007.2 474.1,2016.4 474.4,2096.3 430.1,2086.5" fill="url(#pGV)"/>
<polygon points="506.1,2151.1 603.2,2059.1 812.2,2103.4 812.2,2217.4" fill="#aa875a" stroke="#000" stroke-width="2.7" stroke-linejoin="round" />
<polygon points="506.1,2151.1 603.2,2059.1 812.2,2103.4 812.2,2217.4" fill="url(#pGH)"/>
<polygon points="596.2,1762.1 881.4,1817.8 812.1,1882.2 812.1,2105.5 603.2,2056.6" fill="#dfbd8f" stroke="#000" stroke-width="2.7" stroke-linejoin="round" />
<polygon points="596.2,1762.1 881.4,1817.8 812.1,1882.2 812.1,2105.5 603.2,2056.6" fill="url(#pGV)"/>
<polygon points="506.1,2151.1 812.2,2217.4 814.3,2249.1 476.5,2171.0" fill="#dfbd8f" stroke="#dfbd8f" stroke-width="1" stroke-linejoin="round" />
<polygon points="506.1,2151.1 812.2,2217.4 814.3,2249.1 476.5,2171.0" fill="url(#pGV)"/>
<polygon points="474.1,2016.4 503.3,2021.9 506.1,2151.1 507.4,2178.2 476.5,2171.0" fill="#dfbd8f" stroke="#dfbd8f" stroke-width="1" stroke-linejoin="round" />
<polygon points="474.1,2016.4 503.3,2021.9 506.1,2151.1 507.4,2178.2 476.5,2171.0" fill="url(#pGV)"/>
<polyline points="474.1,2016.4 503.3,2021.9 506.1,2151.1 812.2,2217.4" fill="none" stroke="#000" stroke-width="2.7" stroke-linejoin="round" stroke-linecap="butt" />
<polyline points="474.1,2016.4 476.5,2171.0" fill="none" stroke="#000" stroke-width="3.6" stroke-linejoin="round" stroke-linecap="butt" />
<polygon points="393.1,1669.6 416.2,1672.3 1266.5,1834.0 1263.5,1843.0 1176.1,1938.7 1174.4,1950.0 999.2,1922.0 999.3,1919.1 1086.7,1832.2 903.6,1797.6 596.0,1743.1 495.0,1816.6 275.8,1775.0 275.8,1770.9" fill="#aa875a" stroke="#000" stroke-width="2.7" stroke-linejoin="round" />
<polygon points="393.1,1669.6 416.2,1672.3 1266.5,1834.0 1263.5,1843.0 1176.1,1938.7 1174.4,1950.0 999.2,1922.0 999.3,1919.1 1086.7,1832.2 903.6,1797.6 596.0,1743.1 495.0,1816.6 275.8,1775.0 275.8,1770.9" fill="url(#pGH)"/>
<polygon points="594.8,1742.9 903.6,1797.6 881.4,1817.8 596.2,1762.1" fill="#dfbd8f" stroke="#000" stroke-width="2.7" stroke-linejoin="round" />
<polygon points="594.8,1742.9 903.6,1797.6 881.4,1817.8 596.2,1762.1" fill="url(#pGV)"/>
<polygon points="933.6,1828.6 1063.2,1852.5 1000.2,1921.0 997.9,2145.7 933.8,2131.7" fill="#dfbd8f" stroke="#000" stroke-width="2.7" stroke-linejoin="round" />
<polygon points="933.6,1828.6 1063.2,1852.5 1000.2,1921.0 997.9,2145.7 933.8,2131.7" fill="url(#pGV)"/>
<polygon points="932.8,1803.1 1086.7,1832.2 1063.2,1852.5 933.6,1828.6" fill="#dfbd8f" stroke="#000" stroke-width="2.7" stroke-linejoin="round" />
<polygon points="932.8,1803.1 1086.7,1832.2 1063.2,1852.5 933.6,1828.6" fill="url(#pGV)"/>
<polygon points="845.4,2226.0 933.8,2131.7 997.9,2145.7 997.9,2258.4" fill="#aa875a" stroke="#000" stroke-width="2.7" stroke-linejoin="round" />
<polygon points="845.4,2226.0 933.8,2131.7 997.9,2145.7 997.9,2258.4" fill="url(#pGH)"/>
<polygon points="845.4,2226.0 997.9,2258.4 999.2,2289.2 843.8,2255.4" fill="#dfbd8f" stroke="#dfbd8f" stroke-width="1" stroke-linejoin="round" />
<polygon points="845.4,2226.0 997.9,2258.4 999.2,2289.2 843.8,2255.4" fill="url(#pGV)"/>
<polyline points="845.4,2226.0 997.9,2258.4 999.2,2289.2" fill="none" stroke="#000" stroke-width="2.7" stroke-linejoin="round" stroke-linecap="butt" />
<polygon points="993.8,1840.6 1025.7,1846.1 1025.7,1871.1 993.8,1864.1" fill="#a3a8b0" stroke="#333" stroke-width="1" stroke-linejoin="round" />
<polygon points="996.6,1859.2 1006.3,1853.1 1006.8,1871.1 997.4,1876.6" fill="#111" stroke="#000" stroke-width="1" stroke-linejoin="round" />
<polygon points="842.6,1887.7 932.8,1803.1 933.8,2131.7 845.4,2226.0" fill="#c6a172" stroke="#000" stroke-width="2.7" stroke-linejoin="round" />
<polygon points="842.6,1887.7 932.8,1803.1 933.8,2131.7 845.4,2226.0" fill="url(#pGV)"/>
<polygon points="812.1,1882.2 903.6,1797.6 932.8,1803.1 842.6,1887.7" fill="#aa875a" stroke="#000" stroke-width="2.7" stroke-linejoin="round" />
<polygon points="812.1,1882.2 903.6,1797.6 932.8,1803.1 842.6,1887.7" fill="url(#pGH)"/>
<polygon points="812.1,1882.2 842.6,1887.7 843.8,2255.4 814.3,2249.1 812.2,2217.4" fill="#dfbd8f" stroke="#dfbd8f" stroke-width="1" stroke-linejoin="round" />
<polygon points="812.1,1882.2 842.6,1887.7 843.8,2255.4 814.3,2249.1 812.2,2217.4" fill="url(#pGV)"/>
<polyline points="812.2,2217.4 812.1,1882.2 842.6,1887.7 845.4,2226.0" fill="none" stroke="#000" stroke-width="2.7" stroke-linejoin="round" stroke-linecap="butt" />
<polyline points="476.5,2171.0 814.3,2249.1 843.8,2255.4 999.2,2289.2" fill="none" stroke="#000" stroke-width="3.6" stroke-linejoin="round" stroke-linecap="butt" />
<polygon points="281.3,1772.2 407.6,1680.7 610.1,1718.1 495.0,1809.7" fill="#070707" stroke="#000" stroke-width="1.5" stroke-linejoin="round" />
<polygon points="302.7,1765.9 411.7,1688.2 587.9,1721.5 489.4,1799.2" fill="#1b1b1b" stroke="#000" stroke-width="1" stroke-linejoin="round" />
<polygon points="313.2,1767.5 413.1,1693.2 574.0,1723.7 490.8,1794.4" fill="#000" stroke="none" stroke-width="0" stroke-linejoin="round" />
<polygon points="327.1,1768.1 410.3,1711.2 562.9,1740.3 489.4,1795.8" fill="#1a1a1a" stroke="none" stroke-width="0" stroke-linejoin="round" />
<polygon points="365.9,1732.0 410.3,1711.2 562.9,1740.3 532.4,1763.9" fill="#121212" stroke="none" stroke-width="0" stroke-linejoin="round" />
<polygon points="275.8,1777.8 495.0,1817.5 500.5,2022.0 284.1,1979.0" fill="#dfbd8f" stroke="#000" stroke-width="2.7" stroke-linejoin="round" />
<polygon points="275.8,1777.8 495.0,1817.5 500.5,2022.0 284.1,1979.0" fill="url(#pGV)"/>
<polygon points="367.9,1795.8 402.0,1801.4 403.4,1856.9 371.5,1851.3" fill="#000" stroke="#000" stroke-width="1" stroke-linejoin="round" />
<polygon points="495.0,1817.5 594.8,1741.7 603.2,2056.6 507.4,2153.7 503.3,2021.9 500.5,2021.9" fill="#c6a172" stroke="#000" stroke-width="2.7" stroke-linejoin="round" />
<polygon points="495.0,1817.5 594.8,1741.7 603.2,2056.6 507.4,2153.7 503.3,2021.9 500.5,2021.9" fill="url(#pGV)"/>
<polyline points="513.3,2047.3 812.2,2122.4" fill="none" stroke="#000" stroke-width="6.6" stroke-linejoin="round" stroke-linecap="butt" />
<polyline points="515.8,2103.4 812.2,2165.5" fill="none" stroke="#000" stroke-width="6.6" stroke-linejoin="round" stroke-linecap="butt" />
<ellipse cx="514.5" cy="2041.4" rx="6" ry="12.5" fill="#0a0a0a"/>
<ellipse cx="516.6" cy="2113.1" rx="6" ry="12.5" fill="#0a0a0a"/>
<polygon points="386.3,1611.2 378.6,1615.5 371.8,1619.5 368.2,1624.0 365.9,1631.7 365.3,1663.5 363.6,1669.8 359.3,1675.1 250.8,1754.2 246.1,1759.8 245.3,1766.7 265.4,2198.4 293.7,2205.6 274.4,1779.2 275.8,1770.9 391.1,1675.1 392.9,1668.3 393.1,1640.4 394.5,1630.7 397.9,1624.9 410.4,1616.2" fill="#e2c092" stroke="#000" stroke-width="2.7" stroke-linejoin="round" />
<polygon points="386.3,1611.2 378.6,1615.5 371.8,1619.5 368.2,1624.0 365.9,1631.7 365.3,1663.5 363.6,1669.8 359.3,1675.1 250.8,1754.2 246.1,1759.8 245.3,1766.7 265.4,2198.4 293.7,2205.6 274.4,1779.2 275.8,1770.9 391.1,1675.1 392.9,1668.3 393.1,1640.4 394.5,1630.7 397.9,1624.9 410.4,1616.2" fill="url(#pGV)"/>
<polyline points="386.3,1611.2 378.6,1615.5 371.8,1619.5 368.2,1624.0 365.9,1631.7 365.3,1663.5 363.6,1669.8 359.3,1675.1 250.8,1754.2 246.1,1759.8 245.3,1766.7 265.4,2198.4" fill="none" stroke="#000" stroke-width="3.6" stroke-linejoin="round" stroke-linecap="butt" />
<polyline points="265.4,2198.4 293.7,2205.6 430.1,2086.5" fill="none" stroke="#000" stroke-width="3.6" stroke-linejoin="round" stroke-linecap="butt" />
<polyline points="430.1,2086.5 474.4,2096.3 476.5,2171.0" fill="none" stroke="#000" stroke-width="3.6" stroke-linejoin="round" stroke-linecap="butt" />
<ellipse cx="1130" cy="1891.6" rx="63" ry="28" fill="#d9b687" stroke="#000" stroke-width="2.4"/>
<clipPath id="cHole"><ellipse cx="1130" cy="1891.6" rx="62" ry="27"/></clipPath><ellipse cx="1130" cy="1899.4" rx="61.6" ry="20.6" fill="#000" clip-path="url(#cHole)"/>
<polygon points="999.2,1921.5 1174.4,1949.0 1172.3,1976.4 1001.3,1944.8" fill="#dfbd8f" stroke="#000" stroke-width="2.7" stroke-linejoin="round" />
<polygon points="999.2,1921.5 1174.4,1949.0 1172.3,1976.4 1001.3,1944.8" fill="url(#pGV)"/>
<polygon points="1001.3,1944.8 1172.3,1976.4 1170.2,2135.1 997.9,2101.3" fill="#dfbd8f" stroke="#000" stroke-width="2.7" stroke-linejoin="round" />
<polygon points="1001.3,1944.8 1172.3,1976.4 1170.2,2135.1 997.9,2101.3" fill="url(#pGV)"/>
<polygon points="1043.5,1953.2 1138.5,1974.3 1136.4,1995.4 1045.7,1978.5" fill="#000" stroke="#000" stroke-width="1" stroke-linejoin="round" />
<polygon points="997.9,2101.3 1170.2,2135.1 1170.2,2165.5 999.2,2133.0" fill="#dfbd8f" stroke="#000" stroke-width="2.7" stroke-linejoin="round" />
<polygon points="997.9,2101.3 1170.2,2135.1 1170.2,2165.5 999.2,2133.0" fill="url(#pGV)"/>
<polygon points="1028.8,2138.5 1142.8,2161.3 1085.8,2231.4 1028.8,2297.6" fill="#c6a172" stroke="#000" stroke-width="2.7" stroke-linejoin="round" />
<polygon points="1028.8,2138.5 1142.8,2161.3 1085.8,2231.4 1028.8,2297.6" fill="url(#pGV)"/>
<polygon points="1140.7,2160.4 1171.0,2165.5 1171.0,2248.3 1087.9,2231.4" fill="#dfbd8f" stroke="#000" stroke-width="2.7" stroke-linejoin="round" />
<polygon points="1140.7,2160.4 1171.0,2165.5 1171.0,2248.3 1087.9,2231.4" fill="url(#pGV)"/>
<polygon points="999.2,2133.0 1028.8,2139.3 1028.8,2297.6 999.2,2289.2" fill="#dfbd8f" stroke="#000" stroke-width="2.7" stroke-linejoin="round" />
<polygon points="999.2,2133.0 1028.8,2139.3 1028.8,2297.6 999.2,2289.2" fill="url(#pGV)"/>
<polyline points="999.2,2289.2 1028.8,2297.6 1085.8,2231.4 1170.2,2248.3" fill="none" stroke="#000" stroke-width="3.6" stroke-linejoin="round" stroke-linecap="butt" />
<polygon points="1318.9,1770.7 1304.4,1787.6 1300.5,1794.8 1299.0,1804.4 1297.8,1835.8 1295.6,1844.2 1291.2,1849.7 1209.4,1940.1 1206.0,1947.0 1205.2,1954.0 1197.6,2416.0 1166.0,2407.5 1173.3,1951.2 1173.6,1944.3 1176.1,1938.7 1263.5,1843.0 1267.6,1834.7 1269.3,1790.3 1271.8,1782.0 1284.3,1776.4" fill="#e2c092" stroke="#000" stroke-width="2.7" stroke-linejoin="round" />
<polygon points="1318.9,1770.7 1304.4,1787.6 1300.5,1794.8 1299.0,1804.4 1297.8,1835.8 1295.6,1844.2 1291.2,1849.7 1209.4,1940.1 1206.0,1947.0 1205.2,1954.0 1197.6,2416.0 1166.0,2407.5 1173.3,1951.2 1173.6,1944.3 1176.1,1938.7 1263.5,1843.0 1267.6,1834.7 1269.3,1790.3 1271.8,1782.0 1284.3,1776.4" fill="url(#pGV)"/>
<polygon points="1271.3,1788.2 1287.6,1770.1 1316.5,1773.1 1303.2,1788.2" fill="#aa875a" stroke="#000" stroke-width="2.7" stroke-linejoin="round" />
<polyline points="1166.0,2407.5 1197.6,2416.0" fill="none" stroke="#000" stroke-width="3.6" stroke-linejoin="round" stroke-linecap="butt" />
<!--/MODEL-->
<!--AXES-FRONT-->
<path d="M597 1773.5 L871 1825 M934 1838 L993 1849" stroke="#00b400" stroke-width="1.9" stroke-dasharray="1.9 5.6" fill="none"/>
<path d="M1007.7 1872 L1007.7 1908" stroke="#0000c8" stroke-width="1.9" stroke-dasharray="1.9 5.6" fill="none"/>
<path d="M1012 1853.5 L1054 1860.3 M1282.9 1904 L1920 2027.6" stroke="#00b400" stroke-width="2.2" fill="none"/>
<path d="M1008 1853 L290.8 2561" stroke="#c00000" stroke-width="2" fill="none"/>
<path d="M1013.3 0 L1008.6 1850" stroke="#0000d0" stroke-width="2.2" fill="none"/>
<!--/AXES-FRONT-->
</svg>
<div class="status">
<span style="left:12px;top:1px;font-size:22px;-webkit-text-stroke:.35px #111;letter-spacing:1.15px;">3:50&#8201;PM</span>
<span style="left:120px;top:1px;font-size:22px;-webkit-text-stroke:.35px #111;letter-spacing:.95px;">Thu Jan 4</span>
<span style="left:1806px;top:1px;font-size:22px;-webkit-text-stroke:.3px #111;letter-spacing:.3px;">10%</span>
<svg class="abs" style="left:0;top:0" width="1920" height="36" viewBox="0 0 1920 36">
 <g fill="#8f8f8c"><circle cx="946.5" cy="17.5" r="3.6"/><circle cx="960" cy="17.5" r="3.6"/><circle cx="973.5" cy="17.5" r="3.6"/></g>
 <!-- wifi -->
 <g fill="none" stroke="#111" stroke-width="3.6" stroke-linecap="butt">
  <path d="M1773.6 15.2 A16.5 16.5 0 0 1 1796.6 15.2"/>
  <path d="M1778.2 20.0 A10 10 0 0 1 1792 20.0"/>
 </g>
 <path d="M1785.1 28.2 L1780.9 23.6 A6 6 0 0 1 1789.3 23.6 Z" fill="#111"/>
 <!-- battery -->
 <rect x="1862.2" y="8.4" width="43" height="20.4" rx="5.5" fill="none" stroke="#8a8a88" stroke-width="1.7"/>
 <path d="M1908 14.6 q3 1.8 3 4 q0 2.2 -3 4 z" fill="#8a8a88"/>
 <rect x="1864.8" y="11.6" width="3.7" height="13.8" rx="1.6" fill="#ff2d21"/>
 <path d="M1887.2 6.4 L1875.6 20.4 L1882.4 20.4 L1879.2 30.6 L1891.2 16.2 L1884.2 16.2 Z" fill="#111" stroke="#cdcec9" stroke-width="1.4" paint-order="stroke"/>
</svg>
</div>
<svg width="0" height="0" style="position:absolute"><defs><symbol id="bucket" viewBox="-20 -20 40 40" overflow="visible"><path d="M-0.5 -14.6 L13.7 -0.4 Q15.8 1.7 13.8 3.9 L4.4 14.4 Q2.2 16.7 -0.1 14.5 L-11.9 3.3 Z" fill="#dcebf8" stroke="#103f6e" stroke-width="1.7" stroke-linejoin="round"/>
<ellipse cx="-8.9" cy="-9.2" rx="10" ry="4.9" transform="rotate(-32.7 -8.9 -9.2)" fill="#fff" stroke="#103f6e" stroke-width="1.7"/>
<path d="M-3.2 -9.6 C-11 -10.4 -18.4 -2.8 -19.6 4.6 C-20.2 9 -18.4 10.8 -16.8 9.6 C-15 8.2 -14.4 5.4 -11.6 1.6 C-9.6 -1.4 -7.6 -3.8 -2.2 -8.6 Z" fill="#0f93d6" stroke="none"/>
<path d="M3.6 -13 C7.6 -16.4 12.8 -17.4 14.2 -14.2 C15.8 -10.4 10 -2.2 3.6 0.4" fill="none" stroke="#103f6e" stroke-width="1.7" stroke-linecap="round"/><circle cx="-17" cy="14.6" r="1.6" fill="#0f93d6" stroke="none"/></symbol>
<pattern id="woodsw" width="6" height="44" patternUnits="userSpaceOnUse"><rect width="6" height="44" fill="#d9b183"/><rect x="0" width="1.4" height="44" fill="#c9a070"/><rect x="3.2" width="1" height="44" fill="#e3c096"/></pattern>
</defs></svg>
<div class="tb" style="left:12px;top:38px;width:864px;height:82px;"></div>
<div class="tb" style="left:890px;top:38px;width:720px;height:82px;"></div>
<div class="tb" style="left:1622px;top:38px;width:320px;height:82px;"></div>
<svg class="abs" style="left:0;top:0" width="1920" height="130" viewBox="0 0 1920 130" fill="none" stroke="#103f6e" stroke-width="1.7" stroke-linecap="round" stroke-linejoin="round">
 <g stroke="#c9c9ce" stroke-width="1.4" stroke-linecap="butt">
  <path d="M124.6 47V110M239 47V110M436 47V110M647.6 47V110M762.2 47V110"/>
 </g>
 <!-- home -->
 <g stroke-linecap="square" stroke-linejoin="miter">
 <path d="M47.6 77.9 L67.1 59.3 L86.6 77.9"/>
 <path d="M51.8 80.6 V96.6 H62.6 V84 H72 V96.6 H81.8 V80.6"/>
 <path d="M73.6 60.9 H79.8 V67.4"/>
 </g>
 <!-- person+ -->
 <circle cx="181.6" cy="75.8" r="6.8" fill="#103f6e" stroke="none"/>
 <path d="M171.6 92.6 L173.6 86.2 Q174.6 83.8 177.4 83.8 H186 Q188.8 83.8 189.8 86.2 L192 92.6 Z" fill="#103f6e" stroke="none"/>
 <path d="M193.7 64.9V72.1M190.1 68.5H197.3" stroke="#1b9fe1" stroke-width="1.5" stroke-linecap="butt"/>
 <!-- undo -->
 <path d="M286.6 68.5 H296 A9.5 9.5 0 0 1 296 87.5 H286" stroke-linecap="butt"/>
 <path d="M277 68.3 L286.4 62.4 V74.2 Z" fill="#103f6e" stroke="none"/>
 <!-- redo -->
 <path d="M387 68.5 H377.4 A9.5 9.5 0 0 0 377.4 87.5 H387.6" stroke-linecap="butt"/>
 <path d="M396.8 68.3 L387.4 62.4 V74.2 Z" fill="#103f6e" stroke="none"/>
 <!-- import -->
 <path d="M493.8 61.8 H506.4 Q509.8 61.8 509.8 65.2 V92.2 Q509.8 95.6 506.4 95.6 H478.8 Q475.4 95.6 475.4 92.2 V80.4"/>
 <path d="M476.8 62.8 L494 79.6 M494.2 70.4 V79.7 H484"/>
 <!-- export -->
 <path d="M589 62.8 H577.8 Q574.4 62.8 574.4 66.2 V89.8 Q574.4 93.2 577.8 93.2 H602 Q605.4 93.2 605.4 89.8 V78.2"/>
 <path d="M592.6 75.2 L608.2 59.7 M598 59.6 H608.4 V70.2"/>
 <!-- gear -->
 <path d="M701.19 64.65 L701.52 59.68 L708.08 59.68 L708.41 64.65 L712.25 66.24 L716.00 62.96 L720.64 67.60 L717.36 71.35 L718.95 75.19 L723.92 75.52 L723.92 82.08 L718.95 82.41 L717.36 86.25 L720.64 90.00 L716.00 94.64 L712.25 91.36 L708.41 92.95 L708.08 97.92 L701.52 97.92 L701.19 92.95 L697.35 91.36 L693.60 94.64 L688.96 90.00 L692.24 86.25 L690.65 82.41 L685.68 82.08 L685.68 75.52 L690.65 75.19 L692.24 71.35 L688.96 67.60 L693.60 62.96 L697.35 66.24 Z" stroke-linejoin="round"/>
 <circle cx="704.8" cy="78.8" r="7.4"/>
 <!-- drive -->
 <path d="M810.4 66.4 Q810.7 64.9 812.2 64.9 H827.2 Q828.7 64.9 829 66.4 L833.4 83.4 H805.8 Z"/>
 <rect x="805.4" y="86.4" width="28.4" height="5.6" rx="1.6"/>
 <path d="M808.6 89.2 H814.4" stroke="#8aa3bd" stroke-width="1.6" stroke-linecap="butt"/>
 <!-- material swatch -->
 <circle cx="950.4" cy="78.6" r="21.2" fill="#d9b286" stroke="none"/><circle cx="950.4" cy="78.6" r="21.2" fill="url(#pGV)" stroke="#111" stroke-width="1.8"/>
 <!-- eyedropper -->
 <circle cx="1057.1" cy="92.4" r="5.5" fill="#ff0000" stroke="none"/>
 <path d="M1058.6 90.6 L1073.8 69.8 L1080.4 76.4 Z" fill="#f2f2f7" stroke-width="1.5"/>
 <g transform="translate(1077.6 72.6) rotate(45)" fill="#103f6e" stroke="none">
  <rect x="-6.4" y="-2.6" width="12.8" height="5.2" rx="2.2"/>
  <rect x="-4.6" y="-17" width="9.2" height="16" rx="4.4"/>
 </g>
 <!-- buckets -->
 <use href="#bucket" x="1175.5" y="63" width="40" height="40"/>
 <use href="#bucket" x="1295.6" y="63" width="40" height="40"/>
 <use href="#bucket" x="1415.8" y="63" width="40" height="40"/>
 <g stroke="none">
  <rect x="1169.9" y="58" width="5.5" height="17" fill="#ff0000"/><rect x="1169.9" y="63.4" width="5.5" height="5.8" fill="#103f6e"/>
  <rect x="1289.8" y="58" width="21" height="5.6" fill="#ff0000"/><rect x="1295.6" y="58" width="2" height="5.6" fill="#103f6e"/><rect x="1303" y="58" width="2" height="5.6" fill="#103f6e"/>
  <rect x="1409.8" y="57.6" width="5.2" height="5.2" fill="#ff0000"/><rect x="1416.6" y="57.6" width="5.2" height="5.2" fill="#ff0000"/><rect x="1409.8" y="64.4" width="5.2" height="5.2" fill="#ff0000"/>
 </g>
 <!-- grad cap -->
 <path d="M1531.4 71.6 L1550.6 63.6 L1569.6 71.6 L1550.6 79.6 Z M1538.6 75 V83.2 L1550.6 88 L1562.4 83.2 V75" stroke-width="1.6"/>
 <path d="M1550.6 71.6 L1557 74.4 V90" stroke-width="1.6"/>
 <circle cx="1557" cy="92.4" r="2.8" fill="#ff0000" stroke="none"/>
 <!-- cube -->
 <g stroke="#1d2733" stroke-width="1.5" stroke-linejoin="round">
 <path d="M1663.4 68.9 L1685.5 60.4 L1700.2 77.6 L1677.9 98.4 Z" fill="#86a6bf"/>
 <path d="M1671.6 79.7 L1685.1 73.9 L1700.2 77.6 L1678.8 89.3 Z" fill="#a3c3da" stroke-width="1.3"/>
 <path d="M1663.4 68.9 L1671.6 79.7 M1685.5 60.4 L1685.1 73.9 M1678.8 89.3 L1677.9 98.4" stroke-width="1.3"/>
 </g>
 <!-- groups -->
 <g stroke="#5f86ad" stroke-width="1.1" fill="#e6eff8">
  <path d="M1781.2 67.6 v9.4 a6 2.3 0 0 0 12 0 v-9.4"/><ellipse cx="1787.2" cy="67.6" rx="6" ry="2.3"/>
  <path d="M1797.4 62.4 v9.2 a6 2.3 0 0 0 12 0 v-9.2"/><ellipse cx="1803.4" cy="62.4" rx="6" ry="2.3"/>
  <path d="M1784.2 70 v8.6 M1787.2 70.2 v9 M1790.2 70 v8.6 M1800.4 64.8 v8.6 M1803.4 65 v9 M1806.4 64.8 v8.6" stroke-width=".8"/>
 </g>
 <rect x="1798.6" y="76.6" width="23.4" height="22" stroke="#0f93d6" stroke-width="1.8" stroke-dasharray="1.8 1.8" stroke-linecap="butt"/>
 <path d="M1803.4 83.4 L1810.6 80.4 L1817 83.4 V91.6 L1810.2 95 L1803.4 91.6 Z" stroke="#1d2233" stroke-width="1.9" fill="#cfe3f3" stroke-linejoin="round"/>
 <path d="M1803.4 83.4 L1810.2 86.6 L1817 83.4 M1810.2 86.6 V95" stroke="#1d2233" stroke-width="1.5"/>
 <!-- cylinder -->
 <path d="M1905.4 63.4 V92.6 A14 5.6 0 0 0 1933.4 92.6 V63.4" stroke="#1d2233" stroke-width="1.9" fill="#f0f2f6"/>
 <ellipse cx="1919.4" cy="63.4" rx="14" ry="5.6" stroke="#1d2233" stroke-width="1.9" fill="#f0f2f6"/>
 <path d="M1913.4 69 V97.6" stroke="#444" stroke-width="1.2" stroke-dasharray="3.2 2.4" stroke-linecap="butt"/>
</svg>
<div class="tb" style="left:11px;top:661px;width:83px;height:1238px;"></div>
<div class="abs" style="left:11px;top:1572px;width:79px;height:75px;background:#cfe0ee;border-radius:0 14px 14px 0;"></div>
<div class="abs" style="left:11px;top:1572px;width:8px;height:75px;background:#0097d9;"></div>
<div class="abs" style="left:21px;top:1651px;width:63px;height:1.4px;background:#c9c9ce;"></div>
<svg class="abs" style="left:0;top:640px" width="120" height="1280" viewBox="0 640 120 1280" fill="none">
<g fill="none" stroke="#103f6e" stroke-width="3.7" stroke-linejoin="round" stroke-linecap="butt">
 <path d="M38.3 691.2 L52.3 683.1 L66.3 691.2"/><path d="M36.0 694.0 L36.0 711.3 L50.7 719.8"/><path d="M68.6 694.0 L68.6 711.3 L53.9 719.8"/>
 <polygon points="52.3,690.5 62.2,696.2 62.2,707.6 52.3,713.3 42.4,707.6 42.4,696.2" stroke-width="3.3" stroke-linejoin="miter"/>
</g>
<g fill="#103f6e"><path d="M52.3 696.3000000000001 L55.9 698.3000000000001 L52.3 700.3000000000001 L48.699999999999996 698.3000000000001 Z"/><path d="M47.9 699.7 L51.699999999999996 701.9000000000001 V706.7 L47.9 704.5 Z"/><path d="M56.699999999999996 699.7 L52.9 701.9000000000001 V706.7 L56.699999999999996 704.5 Z"/></g>
<!-- lasso -->
<path d="M39.6 772.6 C34.6 774.8 33.2 781.6 37 786 C40.6 790.4 38.6 799 33.6 803.6 C44 802.6 62 796 65.2 783.8 C67 775 60 769.6 52.6 771" stroke="#0f93d6" stroke-width="1.5" stroke-dasharray="3.6 2.2"/>
<path d="M41.1 764.6 L54.4 771 L50.4 773.2 L54.8 779 L48.6 783.6 L44.4 777.6 L41.2 780.6 Z" fill="#103f6e"/>
<!-- eraser -->
<g transform="translate(51.8 865) rotate(-45)">
 <rect x="-19.4" y="-8.6" width="38.8" height="17.2" fill="#fff"/>
 <rect x="-9.4" y="-8.6" width="18.4" height="17.2" fill="#0097d9"/>
 <rect x="9" y="-8.6" width="10.4" height="17.2" fill="#dcebf8"/>
 <path d="M-14.6 -8.6 H19.4 V8.6 H-14.6 Q-19.4 8.6 -19.4 3.8 V-3.8 Q-19.4 -8.6 -14.6 -8.6 Z M9 -8.6 V8.6" stroke="#103f6e" stroke-width="1.7"/>
</g>
<path d="M36.6 885H67" stroke="#0f93d6" stroke-width="1.5"/>
<!-- section box -->
<path d="M35.5 941.2 L42.5 932.5 L71.8 934.5 L64.2 942.8 Z" fill="#dcebf8"/>
<path d="M35.2 965.1 L42.5 955.3 L71.8 956.4 L65.8 967.2 Z" stroke="#103f6e" stroke-width="1.6" stroke-linejoin="round"/>
<path d="M35.5 941.2 L42.5 932.5 L71.8 934.5 L64.2 942.8 Z M35.5 941.2 V964.6 M64.2 942.8 V963.6 M71.6 934.5 V954" stroke="#0f93d6" stroke-width="1.6" stroke-linejoin="round"/>
<path d="M55 938 Q53 950 52.8 961.3" stroke="#103f6e" stroke-width="1.7"/>
<!-- pencil -->
<path d="M33.9 1050.5 L41.6 1037.4 L47.6 1043.4 Z" fill="#103f6e"/>
<g transform="translate(56.6 1028.6) rotate(-43.6)"><rect x="-17" y="-3.4" width="34" height="6.8" rx="1.2" fill="#f6eef2" stroke="#ff0000" stroke-width="1.7"/><path d="M9.4 -3V3M12.8 -3V3" stroke="#ff0000" stroke-width="1.6"/></g>
<!-- line tool -->
<rect x="36.4" y="1099" width="28.6" height="32.4" fill="#dcebf8" stroke="#0f93d6" stroke-width="2"/>
<path d="M37.7 1129.3 L64.8 1100.4" stroke="#103f6e" stroke-width="1.5"/>
<circle cx="64.8" cy="1100.4" r="5.6" fill="#ff0000" stroke="#f2f2f7" stroke-width="1.4"/>
<circle cx="37.7" cy="1129.3" r="4.6" fill="#103f6e" stroke="#f2f2f7" stroke-width="1.4"/>
<!-- circle tool -->
<circle cx="52.5" cy="1196.8" r="17.8" fill="#dcebf8" stroke="#0f93d6" stroke-width="2.2"/>
<path d="M52.5 1196.8 L65.6 1183.8" stroke="#103f6e" stroke-width="1.5"/>
<circle cx="52.5" cy="1196.8" r="4.6" fill="#103f6e" stroke="#dcebf8" stroke-width="1.4"/>
<circle cx="65.6" cy="1183.8" r="5.6" fill="#ff0000" stroke="#f2f2f7" stroke-width="1.4"/>
<!-- push pull -->
<path d="M32.6 1279.4 L52 1272.6 L72.6 1280.4 L72.6 1285.8 L49.6 1298.6 L32.6 1285.2 Z" fill="#f4f7fb" stroke="#0f93d6" stroke-width="2.2" stroke-linejoin="miter"/>
<path d="M32.6 1279.4 L49.6 1292.4 L72.6 1280.4 M49.6 1292.4 V1298.6" stroke="#0f93d6" stroke-width="1.2"/>
<path d="M52.1 1259.3 L59.8 1270.6 H56.4 V1281 H47.8 V1270.6 H44.4 Z" fill="#ff0000" stroke="#f2f2f7" stroke-width="1.6" paint-order="stroke"/>
<!-- move -->
<g fill="#ff0000" transform="translate(52.6 1362)">
 <path id="mva" d="M0 -20.6 L5.6 -11.6 H2.7 V-4.6 H-2.7 V-11.6 H-5.6 Z"/>
 <use href="#mva" transform="rotate(90)"/><use href="#mva" transform="rotate(180)"/><use href="#mva" transform="rotate(270)"/>
</g>
<!-- rotate -->
<g stroke="#ff0000" stroke-width="2.2" fill="none">
 <path d="M39.8 1448.6 A13.6 13.6 0 0 1 56.6 1432.2"/>
 <path d="M67 1442 A13.6 13.6 0 0 1 49.6 1458.4"/>
</g>
<path d="M58.4 1426.6 L65.8 1434.6 L55.4 1437.8 Z" fill="#ff0000"/>
<path d="M41.2 1456.2 L51.4 1452.6 L48.6 1463.8 Z" fill="#ff0000"/>
<!-- scale -->
<rect x="33.6" y="1509.4" width="37.8" height="34.8" fill="#dcebf8" stroke="#0f93d6" stroke-width="2.2"/>
<path d="M33.6 1520.4 H58.6 V1544.2 H33.6 Z" stroke="#103f6e" stroke-width="2.2"/>
<path d="M69.2 1511 L66.6 1525.4 L62.8 1521.6 L56.6 1529.8 L50.2 1523.6 L57.8 1516.8 L54.2 1513.2 Z" fill="#ff0000" stroke="#dcebf8" stroke-width="1.2" paint-order="stroke"/>
<!-- paint bucket selected -->
<g transform="translate(53.4 1608.6) scale(1.0)"><path d="M-0.5 -14.6 L13.7 -0.4 Q15.8 1.7 13.8 3.9 L4.4 14.4 Q2.2 16.7 -0.1 14.5 L-11.9 3.3 Z" fill="#e2effa" stroke="#103f6e" stroke-width="1.7" stroke-linejoin="round"/>
<ellipse cx="-8.9" cy="-9.2" rx="10" ry="4.9" transform="rotate(-32.7 -8.9 -9.2)" fill="#fff" stroke="#103f6e" stroke-width="1.7"/>
<path d="M-3.2 -9.6 C-11 -10.4 -18.6 -2.4 -20 7 C-20.8 12.6 -18.6 15 -16.6 13.6 C-14.4 12 -14.6 7.4 -11.6 2.6 C-9.6 -0.8 -7.6 -3.6 -2.2 -8.6 Z" fill="#0f93d6" stroke="none"/>
<path d="M3.6 -13 C7.6 -16.4 12.8 -17.4 14.2 -14.2 C15.8 -10.4 10 -2.2 3.6 0.4" fill="none" stroke="#103f6e" stroke-width="1.7" stroke-linecap="round"/></g>
<!-- select arrow -->
<path d="M43.6 1681.2 L43.6 1704 L48.8 1699.1 L52.1 1707.3 L57.8 1704 L54.5 1696.4 L61 1695.9 Z" fill="#103f6e"/>
<!-- tape measure -->
<g transform="translate(53 1773) rotate(-30)"><rect x="-11.6" y="-11.6" width="23.2" height="23.2" rx="3.4" fill="#f2f2f7" stroke="#103f6e" stroke-width="1.7"/></g>
<circle cx="51.8" cy="1772.4" r="6" fill="#ff0000"/>
<path d="M48.8 1785.2 L36.8 1791.8 M36 1789.6 L38.6 1795.4" stroke="#103f6e" stroke-width="1.7"/>
<path d="M38.6 1775 Q38 1779.6 41.6 1782.6" stroke="#103f6e" stroke-width="1.1"/>
<!-- more -->
<g fill="#2a2a3c"><circle cx="42" cy="1857.8" r="2"/><circle cx="52.4" cy="1857.8" r="2"/><circle cx="62.8" cy="1857.8" r="2"/></g>
</svg>
<div class="lb" style="top:776.1px;left:1680.0px;right:auto;width:135.0px;padding:0;text-align:center;">Entity Info</div>
<div class="rb" style="top:751.7px;"><svg width="82" height="82" viewBox="0 0 82 82" fill="none" stroke="#103f6e" stroke-linecap="round"><path d="M41 21.6 L58.4 30.4 V51.6 L41 60.6 L23.6 51.6 V30.4 Z" stroke-width="2.6" stroke-linejoin="miter"/>
<path d="M23.6 30.4 L30 33.6 M58.4 30.4 L52 33.6 M41 60.6 V53" stroke-width="1.6"/>
<path d="M52 33.6 L58.4 30.4 V51.6 L55 53.4" stroke="#ebebeb" stroke-width="0"/>
<circle cx="41.6" cy="38.6" r="8.4" fill="#ebebeb" stroke-width="2"/>
<path d="M46 46 L53.6 57.2" stroke-width="2.4" stroke-linecap="butt"/></svg></div>
<div class="lb" style="top:873.6px;left:1696.0px;right:auto;width:119.0px;padding:0;text-align:center;">Shadows</div>
<div class="rb" style="top:849.2px;"><svg width="82" height="82" viewBox="0 0 82 82" fill="none" stroke="#103f6e" stroke-linecap="round"><path d="M36 41 L42.6 57 L60 48.6 L51.6 36 Z" fill="#103f6e" stroke="none"/>
<path d="M23 28 L39.6 20.6 L49.4 35.4 L49.4 41.6 L33.6 49.4 L23.6 31.4 Z" fill="#ebebeb" stroke-width="1.5" stroke-linejoin="round"/>
<path d="M23 28 L33.4 43.4 L49.4 35.4 M33.4 43.4 L33.6 49.4" stroke-width="1.5"/></svg></div>
<div class="lb" style="top:971.1px;left:1715.6px;right:auto;width:99.4px;padding:0;text-align:center;">Scenes</div>
<div class="rb" style="top:946.7px;"><svg width="82" height="82" viewBox="0 0 82 82" fill="none" stroke="#103f6e" stroke-linecap="round"><rect x="25.6" y="40" width="33.8" height="22" stroke-width="1.8"/>
<path d="M37.6 45.6 L48 51 L37.6 56.4 Z" stroke-width="1.6" stroke-linejoin="round"/>
<path d="M23.6 31.2 L56 21.6 L58.2 28.4 L25.8 38.6 Z" stroke-width="1.6" stroke-linejoin="round"/>
<path d="M29.8 29.4 L36.2 35.4 M37.8 27 L44.2 33 M45.8 24.6 L52.2 30.6" stroke-width="1.5"/></svg></div>
<div class="lb" style="top:1068.6px;left:1745.8px;right:auto;width:69.2px;padding:0;text-align:center;">Tags</div>
<div class="rb" style="top:1044.2px;"><svg width="82" height="82" viewBox="0 0 82 82" fill="none" stroke="#103f6e" stroke-linecap="round"><path d="M43.6 21.4 L58.6 36 Q59.6 37.2 58.6 38.4 L41.4 57.6 H26.8 Q24.6 57.6 24.6 55.4 V41.6 Z" stroke-width="1.9" stroke-linejoin="round"/>
<circle cx="32.4" cy="50" r="2.4" fill="#103f6e" stroke="none"/></svg></div>
<div class="lb" style="top:1166.1px;left:1730.4px;right:auto;width:84.6px;padding:0;text-align:center;">Styles</div>
<div class="rb" style="top:1141.7px;"><svg width="82" height="82" viewBox="0 0 82 82" fill="none" stroke="#103f6e" stroke-linecap="round"><path d="M22 34.6 L38.6 21.6 L49.4 26.4 L49.4 34 M22 34.6 V52.8 L34.6 59.6 L41.6 51 M22 34.6 L34.6 41 V59.6 M34.6 41 L49.4 26.4" stroke-width="2.4" stroke-linejoin="round"/>
<path d="M42.8 37.6 V56 A8.2 3 0 0 0 59.2 56 V37.6" fill="#ebebeb" stroke-width="2"/>
<ellipse cx="51" cy="37.6" rx="8.2" ry="3" fill="#ebebeb" stroke-width="2"/></svg></div>
<div class="lb" style="top:1263.6px;left:1714.5px;right:auto;width:100.5px;padding:0;text-align:center;">Display</div>
<div class="rb" style="top:1239.2px;"><svg width="82" height="82" viewBox="0 0 82 82" fill="none" stroke="#103f6e" stroke-linecap="round"><circle cx="31.4" cy="41.6" r="8.2" stroke-width="1.7"/><circle cx="51.6" cy="41.6" r="8.2" stroke-width="1.7"/>
<path d="M39.4 40 Q41.5 38.2 43.6 40 M21 36.6 H26 M57 36.6 H62" stroke-width="1.5"/></svg></div>
<div class="lb" style="top:1361.1px;left:1677.0px;right:auto;width:138.0px;padding:0;text-align:center;">Model Info</div>
<div class="rb" style="top:1336.7px;"><svg width="82" height="82" viewBox="0 0 82 82" fill="none" stroke="#103f6e" stroke-linecap="round"><circle cx="41.6" cy="41" r="18.8" stroke-width="1.7"/>
<circle cx="41.6" cy="31" r="2.2" fill="#103f6e" stroke="none"/><path d="M41.6 36.6 V51.4" stroke-width="3.4" stroke-linecap="butt"/></svg></div>
<div class="lb" style="top:1458.6px;left:1697.0px;right:auto;width:118.0px;padding:0;text-align:center;">Materials</div>
<div class="rb" style="top:1434.2px;"><svg width="82" height="82" viewBox="0 0 82 82" fill="none" stroke="#103f6e" stroke-linecap="round"><path d="M41.4 21.4 L59.4 28.8 V51 L41.4 60.6 L23.4 51 V28.8 Z M23.4 28.8 L41.4 37.4 L59.4 28.8 M41.4 37.4 V60.6" stroke-width="1.7" stroke-linejoin="round"/>
<g fill="#103f6e" stroke="none">
<path d="M23.4 28.8 L29.4 31.7 V39.3 L23.4 36.2 Z"/><path d="M35.4 34.5 L41.4 37.4 V45.1 L35.4 42.2 Z"/>
<path d="M29.4 39.3 L35.4 42.2 V49.9 L29.4 46.8 Z"/><path d="M23.4 43.6 L29.4 46.8 V54.2 L23.4 51 Z"/><path d="M35.4 49.9 L41.4 53 V60.6 L35.4 57.4 Z"/>
</g></svg></div>
<div class="lb" style="top:1556.1px;left:1722.8px;right:auto;width:92.2px;padding:0;text-align:center;">Soften</div>
<div class="rb" style="top:1531.7px;"><svg width="82" height="82" viewBox="0 0 82 82" fill="none" stroke="#103f6e" stroke-linecap="round"><circle cx="41.6" cy="41" r="18.6" stroke-width="1.6"/>
<path d="M40.6 22.4 V59.6 M43.2 22.4 V59.6" stroke-width="1.5"/>
<path d="M48.6 23.8 V58.2 M54 27.2 V54.8 M43.2 29.4 H56.2 M43.2 36.4 H59.6 M43.2 43.6 H60 M43.2 50.6 H57.4" stroke-width="1.4"/></svg></div>
<div class="lb" style="top:1653.6px;left:1706.2px;right:auto;width:108.8px;padding:0;text-align:center;">Outliner</div>
<div class="rb" style="top:1629.2px;"><svg width="82" height="82" viewBox="0 0 82 82" fill="none" stroke="#103f6e" stroke-linecap="round"><rect x="22.4" y="20.6" width="30" height="9.6" rx="1.2" stroke-width="1.5"/>
<rect x="33.6" y="33.6" width="28.4" height="10.4" rx="1.2" stroke-width="1.5"/>
<rect x="33.6" y="48.6" width="28.4" height="10.4" stroke-width="1.5"/>
<path d="M27.6 30.2 V53.6 H33.6 M27.6 39 H33.6" stroke-width="1.5"/></svg></div>
<div class="lb" style="top:1751.1px;left:1746.4px;right:auto;width:68.6px;padding:0;text-align:center;">Help</div>
<div class="rb" style="top:1726.7px;"><svg width="82" height="82" viewBox="0 0 82 82" fill="none" stroke="#103f6e" stroke-linecap="round"><circle cx="41.6" cy="40.6" r="18.2" stroke-width="1.7"/>
<path d="M35.6 35.6 Q35.8 30.2 41.6 30.2 Q47.4 30.2 47.4 35.4 Q47.4 38.6 44 40.6 Q41.6 42.2 41.6 45.4" stroke-width="2.6" stroke-linecap="butt"/>
<circle cx="41.6" cy="50.4" r="1.9" fill="#103f6e" stroke="none"/></svg></div>
<div id="meas">Measurements</div>
</body>
</html>
